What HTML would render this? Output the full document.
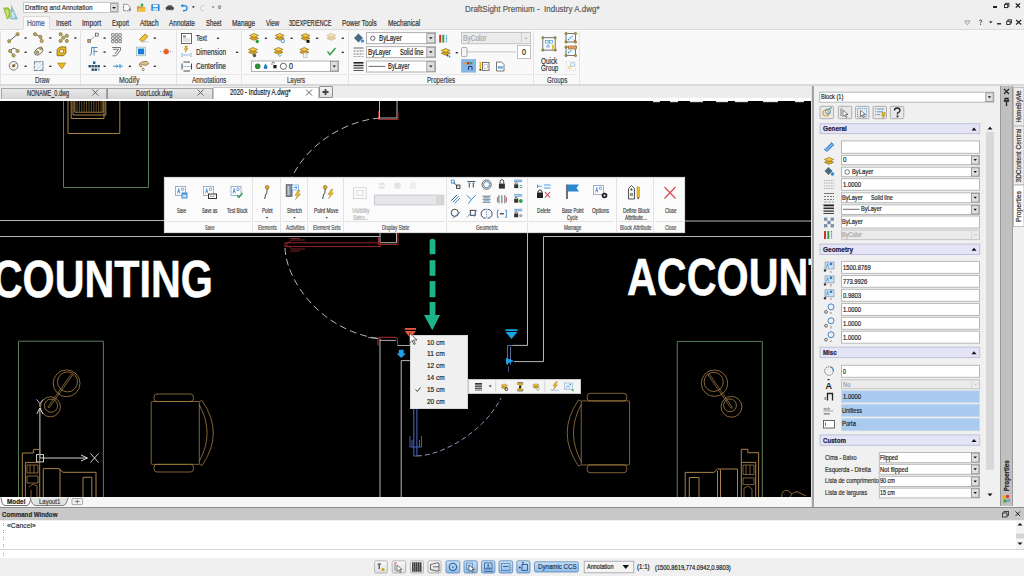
<!DOCTYPE html>
<html><head><meta charset="utf-8">
<style>
*{margin:0;padding:0;box-sizing:border-box}
html,body{width:1024px;height:576px;overflow:hidden;background:#f0f0f0;font-family:"Liberation Sans",sans-serif;color:#222;position:relative}
.a{position:absolute}
.t{position:absolute;white-space:pre;transform-origin:0 50%;-webkit-text-stroke:.2px currentColor}
svg{overflow:visible}

</style></head><body>
<div class="a" style="left:0px;top:0px;width:1024px;height:29px;background:#efefef;"></div>
<svg class="a" style="left:0px;top:0px;" width="30" height="30" viewBox="0 0 30 30"><path d="M11.2 4.3 L18 19.5 H10.3 Z" fill="#8ec0cc"/><path d="M3 7.8 L7.5 7.2 Q10.8 8.5 10.8 13 Q10.8 18.5 7 19.6 Z" fill="#94c43c"/><path d="M5.3 9.5 L7.3 9.3 Q8.8 10.5 8.8 13.2 Q8.8 16.5 7 17.3Z" fill="#c8e080"/><path d="M14 13 Q12 12.5 12 14 Q12 15 13.3 15.2 Q14.5 15.5 14.2 16.6 Q13.8 17.6 11.8 17" fill="none" stroke="#f4fbff" stroke-width="1.1"/></svg>
<div class="a" style="left:23px;top:2px;width:96px;height:11px;background:#fff;border:1px solid #c8c8c8;"></div>
<div class="a" style="left:110px;top:3px;width:8px;height:9px;background:#dcdcdc;border:1px solid #a8a8a8;"></div>
<svg class="a" style="left:111px;top:6px;" width="6" height="4" viewBox="0 0 6 4"><path d="M1 1 L5 1 L3 3 Z" fill="#222"/></svg>
<div class="t" style="left:25.00px;top:3.60px;font-size:8px;line-height:8px;color:#333;transform:scaleX(0.809);">Drafting and Annotation</div>
<svg class="a" style="left:0px;top:0px;" width="240" height="20" viewBox="0 0 240 20"><path d="M123.5 4.3 H127.5 L130 6.8 V10.8 H123.5 Z" fill="#fafafa" stroke="#666" stroke-width=".8" stroke-dasharray="2,.6"/><path d="M128.5 9.5 H131 M129.75 8.3 V10.8" stroke="#666" stroke-width=".7"/><path d="M137 6.3 H140 L141 7.3 H145.2 V11.5 H137 Z" fill="#d89a20"/><path d="M137 11.5 L138.5 8.3 H145.5 L144.5 11.5Z" fill="#f2c040"/><path d="M142 3.3 L144 5.3 H142.8 V7 H141.2 V5.3 H140Z" fill="#30a040"/><rect x="151.3" y="4.3" width="8.3" height="6.8" rx=".8" fill="#2a88d8"/><rect x="153" y="4.8" width="4.8" height="2.4" fill="#fff"/><rect x="152.8" y="8.2" width="5.2" height="2.5" fill="#d8e8f8"/><rect x="165.7" y="6.5" width="8.2" height="3.5" rx="1.5" fill="#444"/><rect x="167.5" y="5.3" width="4.6" height="2" rx=".8" fill="#555"/><circle cx="167.8" cy="9.8" r=".9" fill="#888"/><circle cx="171.8" cy="9.8" r=".9" fill="#888"/><path d="M182.2 5.8 Q186.8 5 187 8 Q187 11 183 10.8" fill="none" stroke="#2a80d8" stroke-width="1.4"/><path d="M180.3 5.8 L183.2 4 L183.2 7.6Z" fill="#2a80d8"/><path d="M191.8 6.3 H194.8 L193.3 8.2Z" fill="#333"/><path d="M204.5 5.8 Q200.5 5.3 200.5 8 Q200.5 11 204 10.8" fill="none" stroke="#d4d4d4" stroke-width="1.2"/><path d="M211.8 6.5 H214.6 L213.2 8.2Z" fill="#666"/><rect x="218" y="5.7" width="3.2" height=".8" fill="#555"/><path d="M218 7.5 H221.2 L219.6 9.2Z" fill="#555"/></svg>
<div class="t" style="left:465.00px;top:3.55px;font-size:9.5px;line-height:9.5px;color:#5a5a5a;transform:scaleX(0.841);">DraftSight Premium -  Industry A.dwg*</div>
<div class="a" style="left:993.4px;top:6px;width:3.8px;height:1.6px;background:#222;"></div>
<svg class="a" style="left:0px;top:0px;" width="1024" height="576" viewBox="0 0 1024 576"><rect x="1005.6" y="3.3" width="3.3" height="3" fill="none" stroke="#222" stroke-width=".9"/><rect x="1004.5" y="4.6" width="3.3" height="3" fill="#efefef" stroke="#222" stroke-width=".9"/><path d="M1015.8 3.3 L1020 7.6 M1020 3.3 L1015.8 7.6" stroke="#111" stroke-width="1.2"/></svg>
<svg class="a" style="left:0px;top:0px;" width="1024" height="576" viewBox="0 0 1024 576"><path d="M967.3 24.6 L965 22 Q964.5 20.6 965.8 20.5 Q966.9 20.4 967.3 21.5 Q967.7 20.4 968.8 20.5 Q970.1 20.6 969.6 22 Z" fill="none" stroke="#777" stroke-width=".7"/><path d="M979.3 21.2 Q979.5 20 980.6 20 Q981.8 20 981.8 21.2 Q981.8 22 980.6 22.6 V23.4" fill="none" stroke="#333" stroke-width=".9"/><rect x="980.2" y="24" width=".9" height=".9" fill="#333"/><path d="M989 21.3 H992.6 L990.8 23.5Z" fill="#333"/><rect x="997" y="23" width="4" height="1.5" fill="#333"/><rect x="1008" y="19.8" width="3.4" height="3.2" fill="none" stroke="#222" stroke-width=".9"/><rect x="1006.7" y="21.3" width="3.4" height="3.2" fill="#efefef" stroke="#222" stroke-width=".9"/><path d="M1016.1 20 L1021.2 24.5 M1021.2 20 L1016.1 24.5" stroke="#222" stroke-width="1.1"/></svg>
<div class="a" style="left:23px;top:16px;width:27px;height:14px;background:#f9f9f9;border:1px solid #dadada;border-bottom:none;"></div>
<div class="t" style="left:27.40px;top:19.05px;font-size:8.5px;line-height:8.5px;color:#4a5678;transform:scaleX(0.776);">Home</div>
<div class="t" style="left:55.50px;top:19.05px;font-size:8.5px;line-height:8.5px;color:#333;transform:scaleX(0.720);">Insert</div>
<div class="t" style="left:81.50px;top:19.05px;font-size:8.5px;line-height:8.5px;color:#333;transform:scaleX(0.789);">Import</div>
<div class="t" style="left:111.80px;top:19.05px;font-size:8.5px;line-height:8.5px;color:#333;transform:scaleX(0.692);">Export</div>
<div class="t" style="left:139.50px;top:19.05px;font-size:8.5px;line-height:8.5px;color:#333;transform:scaleX(0.768);">Attach</div>
<div class="t" style="left:169.40px;top:19.05px;font-size:8.5px;line-height:8.5px;color:#333;transform:scaleX(0.758);">Annotate</div>
<div class="t" style="left:205.50px;top:19.05px;font-size:8.5px;line-height:8.5px;color:#333;transform:scaleX(0.698);">Sheet</div>
<div class="t" style="left:231.80px;top:19.05px;font-size:8.5px;line-height:8.5px;color:#333;transform:scaleX(0.755);">Manage</div>
<div class="t" style="left:265.80px;top:19.05px;font-size:8.5px;line-height:8.5px;color:#333;transform:scaleX(0.722);">View</div>
<div class="t" style="left:289.40px;top:19.05px;font-size:8.5px;line-height:8.5px;color:#333;transform:scaleX(0.644);">3DEXPERIENCE</div>
<div class="t" style="left:342.40px;top:19.05px;font-size:8.5px;line-height:8.5px;color:#333;transform:scaleX(0.752);">Power Tools</div>
<div class="t" style="left:388.00px;top:19.05px;font-size:8.5px;line-height:8.5px;color:#333;transform:scaleX(0.749);">Mechanical</div>
<div class="a" style="left:0px;top:29px;width:1024px;height:57px;background:#f9f9f9;"></div>
<div class="a" style="left:0px;top:29px;width:23px;height:1px;background:#dadada;"></div>
<div class="a" style="left:50px;top:29px;width:974px;height:1px;background:#dadada;"></div>
<div class="a" style="left:0px;top:84px;width:1024px;height:2px;background:#d9d9d9;"></div>
<div class="a" style="left:2px;top:74px;width:77px;height:1px;background:#e6e6e6;"></div>
<div class="a" style="left:82px;top:74px;width:93px;height:1px;background:#e6e6e6;"></div>
<div class="a" style="left:177px;top:74px;width:63px;height:1px;background:#e6e6e6;"></div>
<div class="a" style="left:243px;top:74px;width:104px;height:1px;background:#e6e6e6;"></div>
<div class="a" style="left:350px;top:74px;width:182px;height:1px;background:#e6e6e6;"></div>
<div class="a" style="left:535px;top:74px;width:42px;height:1px;background:#e6e6e6;"></div>
<div class="a" style="left:80px;top:31px;width:1px;height:53px;background:#e3e3e3;"></div>
<div class="a" style="left:176px;top:31px;width:1px;height:53px;background:#e3e3e3;"></div>
<div class="a" style="left:241px;top:31px;width:1px;height:53px;background:#e3e3e3;"></div>
<div class="a" style="left:348px;top:31px;width:1px;height:53px;background:#e3e3e3;"></div>
<div class="a" style="left:533px;top:31px;width:1px;height:53px;background:#e3e3e3;"></div>
<div class="a" style="left:579px;top:31px;width:1px;height:53px;background:#e3e3e3;"></div>
<div class="a" style="left:0px;top:31px;width:1px;height:53px;background:#e3e3e3;"></div>
<div class="t" style="left:34.60px;top:75.55px;font-size:8.5px;line-height:8.5px;color:#444;transform:scaleX(0.736);">Draw</div>
<div class="t" style="left:119.00px;top:75.55px;font-size:8.5px;line-height:8.5px;color:#444;transform:scaleX(0.815);">Modify</div>
<div class="t" style="left:192.30px;top:75.55px;font-size:8.5px;line-height:8.5px;color:#444;transform:scaleX(0.764);">Annotations</div>
<div class="t" style="left:286.50px;top:75.55px;font-size:8.5px;line-height:8.5px;color:#444;transform:scaleX(0.706);">Layers</div>
<div class="t" style="left:427.00px;top:75.55px;font-size:8.5px;line-height:8.5px;color:#444;transform:scaleX(0.723);">Properties</div>
<div class="t" style="left:546.70px;top:75.55px;font-size:8.5px;line-height:8.5px;color:#444;transform:scaleX(0.728);">Groups</div>
<svg class="a" style="left:0px;top:0px;" width="1024" height="576" viewBox="0 0 1024 576"><line x1="9.2" y1="41.2" x2="17.6" y2="34.2" stroke="#555" stroke-width=".9"/><circle cx="9.2" cy="41.2" r="1.6" fill="#b8a860" stroke="#8a7a40" stroke-width=".8"/><circle cx="17.6" cy="34.2" r="1.6" fill="#b8a860" stroke="#8a7a40" stroke-width=".8"/><polyline points="35.1,34.2 40.4,36.8 41.7,41" fill="none" stroke="#555" stroke-width=".9"/><circle cx="35.1" cy="34.2" r="1.6" fill="#b8a860" stroke="#8a7a40" stroke-width=".8"/><circle cx="40.4" cy="36.8" r="1.6" fill="#b8a860" stroke="#8a7a40" stroke-width=".8"/><circle cx="41.7" cy="41" r="1.6" fill="#d8b060" stroke="#8a7a40" stroke-width=".8"/><circle cx="60.6" cy="34.2" r="1.6" fill="#b8a860" stroke="#8a7a40" stroke-width=".8"/><circle cx="66.8" cy="35.8" r="1.6" fill="#b8a860" stroke="#8a7a40" stroke-width=".8"/><circle cx="63.3" cy="37.7" r="1.6" fill="#b8a860" stroke="#8a7a40" stroke-width=".8"/><circle cx="60.6" cy="40.9" r="1.6" fill="#b8a860" stroke="#8a7a40" stroke-width=".8"/><circle cx="66.8" cy="40.9" r="1.6" fill="#b8a860" stroke="#8a7a40" stroke-width=".8"/><rect x="24.5" y="37.3" width="2.2" height="1.4" fill="#333"/><rect x="49.2" y="37.3" width="2.2" height="1.4" fill="#333"/><rect x="74.3" y="37.3" width="2.2" height="1.4" fill="#333"/><path d="M10.1 51 Q13.8 45.5 17.6 51" fill="none" stroke="#555" stroke-width=".9"/><path d="M10.1 51 L13.6 55.5" stroke="#555" stroke-width=".9"/><circle cx="10.1" cy="51" r="1.6" fill="#b8a860" stroke="#8a7a40" stroke-width=".8"/><circle cx="17.6" cy="51" r="1.6" fill="#b8a860" stroke="#8a7a40" stroke-width=".8"/><circle cx="13.6" cy="55.5" r="1.6" fill="#b8a860" stroke="#8a7a40" stroke-width=".8"/><ellipse cx="38.7" cy="51.3" rx="4.8" ry="3" transform="rotate(-40 38.7 51.3)" fill="none" stroke="#666" stroke-width=".9"/><circle cx="37.3" cy="52.3" r="1.5" fill="#b8a860" stroke="#8a7a40" stroke-width=".8"/><circle cx="40.8" cy="48.3" r="1.4" fill="#b8a860" stroke="#8a7a40" stroke-width=".8"/><path d="M58 48.5 L60.5 46.9 H65.9 V53 L63.5 55.7 H57.1 V50 Z" fill="#e8b820" stroke="#8a6a10" stroke-width=".9"/><circle cx="61.6" cy="51.3" r="2" fill="#fff8e0" stroke="#8a6a10" stroke-width=".8"/><rect x="24.5" y="51.6" width="2.2" height="1.4" fill="#333"/><rect x="49.2" y="51.6" width="2.2" height="1.4" fill="#333"/><circle cx="13.6" cy="65.8" r="4.3" fill="none" stroke="#666" stroke-width=".9"/><circle cx="13.6" cy="65.8" r="1.3" fill="#6a6030" stroke="#8a7a40" stroke-width=".8"/><line x1="13.6" y1="65.8" x2="17" y2="62.5" stroke="#8a7a40" stroke-width=".8"/><rect x="34.3" y="61.8" width="8.7" height="8.8" fill="#cfe4ea" stroke="#607880" stroke-width=".8"/><path d="M34.5 66 L38.5 62 M34.5 69.5 L42 62 M38 70.4 L42.8 65.6" stroke="#fff" stroke-width="1.1"/><path d="M57.6 63.1 H65.9 L61.8 68.9 Z" fill="#f0b818" stroke="#9a7010" stroke-width=".6"/><rect x="24.5" y="65.60000000000001" width="2.2" height="1.4" fill="#333"/><rect x="49.2" y="65.60000000000001" width="2.2" height="1.4" fill="#333"/><line x1="89.5" y1="41" x2="96.5" y2="34.8" stroke="#4a90c8" stroke-width="1" stroke-dasharray="1.5,1"/><rect x="87.8" y="39.6" width="2.8" height="2.8" fill="#c8a850" stroke="#555" stroke-width=".6"/><rect x="95.4" y="33.2" width="2.8" height="2.8" fill="#fff" stroke="#444" stroke-width=".7"/><rect x="111.6" y="33.6" width="2.6" height="2.5" rx=".6" fill="#fff" stroke="#555" stroke-width=".8"/><rect x="111.6" y="36.9" width="2.6" height="2.5" rx=".6" fill="#fff" stroke="#555" stroke-width=".8"/><rect x="111.6" y="40.2" width="2.6" height="2.5" rx=".6" fill="#fff" stroke="#555" stroke-width=".8"/><rect x="115.19999999999999" y="33.6" width="2.6" height="2.5" rx=".6" fill="#fff" stroke="#555" stroke-width=".8"/><rect x="115.19999999999999" y="36.9" width="2.6" height="2.5" rx=".6" fill="#fff" stroke="#555" stroke-width=".8"/><rect x="115.19999999999999" y="40.2" width="2.6" height="2.5" rx=".6" fill="#fff" stroke="#555" stroke-width=".8"/><rect x="118.8" y="33.6" width="2.6" height="2.5" rx=".6" fill="#fff" stroke="#555" stroke-width=".8"/><rect x="118.8" y="36.9" width="2.6" height="2.5" rx=".6" fill="#fff" stroke="#555" stroke-width=".8"/><rect x="118.8" y="40.2" width="2.6" height="2.5" rx=".6" fill="#fff" stroke="#555" stroke-width=".8"/><path d="M139.5 39.5 L145 34 L148 36.5 L142.5 42 Z" fill="#f2c230" stroke="#8a6a10" stroke-width=".7"/><line x1="142" y1="41.8" x2="148" y2="41.8" stroke="#bbb" stroke-width=".8"/><rect x="103.5" y="37.4" width="2.2" height="1.4" fill="#333"/><rect x="153.7" y="37.4" width="2.2" height="1.4" fill="#333"/><path d="M89.5 55.5 Q91.5 55.5 91.5 52 V47.5 H97.5 M94 47.5 V55.5 M94 51.5 H97.5" fill="none" stroke="#4a90c8" stroke-width="1"/><path d="M112.1 47.5 H120.5 V50 L116 55.8 H112.5 M113 49.3 H118.5 L115 54" fill="none" stroke="#666" stroke-width=".9"/><rect x="136.5" y="47.1" width="9.1" height="8.7" fill="#e8f0f8" stroke="#8aa" stroke-width=".6"/><rect x="138" y="48.6" width="6.1" height="5.7" fill="#1a7ad8"/><circle cx="166.2" cy="51.5" r="2.6" fill="#e85a20" stroke="#f08040" stroke-width="1.2" stroke-dasharray="1,.8"/><line x1="160" y1="51.5" x2="162.3" y2="51.5" stroke="#4a90c8" stroke-width=".8" stroke-dasharray="1,1"/><line x1="170" y1="51.5" x2="172.5" y2="51.5" stroke="#4a90c8" stroke-width=".8" stroke-dasharray="1,1"/><rect x="103.5" y="51.4" width="2.2" height="1.4" fill="#333"/><rect x="93" y="61.5" width="2.4" height="2.4" fill="#1f4e70"/><rect x="88.5" y="65" width="2.4" height="2.4" fill="#1f4e70"/><rect x="91.5" y="65" width="2.4" height="2.4" fill="#1f4e70"/><rect x="94.5" y="65" width="2.4" height="2.4" fill="#1f4e70"/><rect x="97.5" y="65" width="2.4" height="2.4" fill="#1f4e70"/><rect x="91.5" y="68.5" width="2.4" height="2.4" fill="#1f4e70"/><rect x="94.5" y="68.5" width="2.4" height="2.4" fill="#1f4e70"/><circle cx="98.5" cy="69.5" r="1.3" fill="#aaa"/><path d="M113 66.2 H118 M116.3 64.8 L118 66.2 L116.3 67.6 M120 64 V68.4 M118.4 66.2 H123" fill="none" stroke="#2a88c8" stroke-width=".9"/><path d="M139 64 Q142 60.5 147 61.5 L149 63.5 L146 65.5 L141.5 64.5 L140.5 67 Z" fill="#d8c090" stroke="#8a6a30" stroke-width=".7"/><circle cx="143.2" cy="69.5" r="1.1" fill="#fff" stroke="#6a6030" stroke-width=".7"/><line x1="141" y1="66" x2="143" y2="68.5" stroke="#8a6a30" stroke-width=".6"/><rect x="103.5" y="65.60000000000001" width="2.2" height="1.4" fill="#333"/><rect x="128.8" y="65.60000000000001" width="2.2" height="1.4" fill="#333"/><rect x="153.7" y="65.60000000000001" width="2.2" height="1.4" fill="#333"/><rect x="181.5" y="33.5" width="10" height="10" fill="#fff" stroke="#555" stroke-width=".9"/><rect x="183" y="35.5" width="3" height="2" fill="#888"/><line x1="183" y1="39" x2="190" y2="39" stroke="#aaa" stroke-width=".7"/><line x1="183" y1="41" x2="190" y2="41" stroke="#aaa" stroke-width=".7"/><path d="M185.5 46 L187.5 46 L186.5 48.5 L188 48.5 L185.2 52.3 L185.8 49.6 L184.5 49.6Z" fill="#f0b818" stroke="#9a7010" stroke-width=".4"/><path d="M182 53 V57 M191 53 V57 M182.5 55 H190.5" stroke="#3a80c0" stroke-width=".8" stroke-dasharray="1,.6"/><path d="M183.5 62 H190 M183.5 71 H190 M182 63.5 V69.5 M191.5 63.5 V69.5" stroke="#333" stroke-width=".9"/><path d="M182 66.5 H191.5" stroke="#4a90c8" stroke-width=".8" stroke-dasharray="1.5,1"/><rect x="216.9" y="37.6" width="2.2" height="1.4" fill="#333"/><rect x="236" y="51.6" width="2.2" height="1.4" fill="#333"/></svg>
<div class="t" style="left:196.00px;top:33.70px;font-size:9px;line-height:9px;color:#333;transform:scaleX(0.666);">Text</div>
<div class="t" style="left:196.00px;top:47.60px;font-size:9px;line-height:9px;color:#333;transform:scaleX(0.706);">Dimension</div>
<div class="t" style="left:196.00px;top:62.10px;font-size:9px;line-height:9px;color:#333;transform:scaleX(0.731);">Centerline</div>
<svg class="a" style="left:0px;top:0px;" width="1024" height="576" viewBox="0 0 1024 576"><path d="M249.5 38.3 L254 36.3 L258.5 38.3 L254 40.3Z" fill="#e0a818" stroke="#7a5a10" stroke-width=".6"/><path d="M249.5 35.5 L254 33.5 L258.5 35.5 L254 37.5Z" fill="#f6cc40" stroke="#7a5a10" stroke-width=".6"/><circle cx="257.3" cy="41.5" r="1.7" fill="#2a9a3a"/><path d="M275.2 38.3 L279.7 36.3 L284.2 38.3 L279.7 40.3Z" fill="#e0a818" stroke="#7a5a10" stroke-width=".6"/><path d="M275.2 35.5 L279.7 33.5 L284.2 35.5 L279.7 37.5Z" fill="#f6cc40" stroke="#7a5a10" stroke-width=".6"/><circle cx="282.8" cy="41" r="1.7" fill="#fff" stroke="#3a9ae0" stroke-width="1"/><path d="M301.0 38.3 L305.5 36.3 L310.0 38.3 L305.5 40.3Z" fill="#e0a818" stroke="#7a5a10" stroke-width=".6"/><path d="M301.0 35.5 L305.5 33.5 L310.0 35.5 L305.5 37.5Z" fill="#f6cc40" stroke="#7a5a10" stroke-width=".6"/><rect x="306.5" y="40" width="3" height="2.8" fill="#111"/><g opacity=".45"><path d="M326.8 38.3 L331.3 36.3 L335.8 38.3 L331.3 40.3Z" fill="#e0a818" stroke="#7a5a10" stroke-width=".6"/><path d="M326.8 35.5 L331.3 33.5 L335.8 35.5 L331.3 37.5Z" fill="#f6cc40" stroke="#7a5a10" stroke-width=".6"/></g><path d="M248.5 52.3 L253 50.3 L257.5 52.3 L253 54.3Z" fill="#e0a818" stroke="#7a5a10" stroke-width=".6"/><path d="M248.5 49.5 L253 47.5 L257.5 49.5 L253 51.5Z" fill="#f6cc40" stroke="#7a5a10" stroke-width=".6"/><circle cx="254.5" cy="55.5" r="1.7" fill="#555"/><path d="M274.0 52.3 L278.5 50.3 L283.0 52.3 L278.5 54.3Z" fill="#e0a818" stroke="#7a5a10" stroke-width=".6"/><path d="M274.0 49.5 L278.5 47.5 L283.0 49.5 L278.5 51.5Z" fill="#f6cc40" stroke="#7a5a10" stroke-width=".6"/><path d="M278 55 l2 1.5 l1.5 -2" stroke="#5a9ac8" stroke-width=".8" fill="none"/><path d="M299.8 52.3 L304.3 50.3 L308.8 52.3 L304.3 54.3Z" fill="#e0a818" stroke="#7a5a10" stroke-width=".6"/><path d="M299.8 49.5 L304.3 47.5 L308.8 49.5 L304.3 51.5Z" fill="#f6cc40" stroke="#7a5a10" stroke-width=".6"/><rect x="303.5" y="53" width="3.5" height="4.5" fill="#f4f4f4" stroke="#aaa" stroke-width=".6"/><path d="M327.5 51.5 L330 54.5 L335.5 48" fill="none" stroke="#3aa050" stroke-width="1.5"/><rect x="264.8" y="37.6" width="2.2" height="1.4" fill="#333"/><rect x="290.5" y="37.6" width="2.2" height="1.4" fill="#333"/><rect x="316" y="37.6" width="2.2" height="1.4" fill="#333"/><rect x="341.7" y="37.6" width="2.2" height="1.4" fill="#333"/><rect x="341.7" y="51.699999999999996" width="2.2" height="1.4" fill="#333"/><rect x="251.5" y="61" width="87" height="10.5" fill="#fff" stroke="#b0b0b0" stroke-width="1"/><rect x="330.5" y="61.5" width="7.5" height="9.5" fill="#e0e0e0" stroke="#909090" stroke-width=".8"/><path d="M332.5 65.5 H336 L334.25 67.5Z" fill="#222"/><circle cx="257.7" cy="66.3" r="2.8" fill="#2e8b3e"/><path d="M265.6 63.5 Q267.6 66.5 267.5 67.2 A1.9 1.9 0 1 1 263.7 67.2 Q263.6 66.5 265.6 63.5Z" fill="#2a78d0"/><path d="M272 65 V63.5 Q272 62 273.3 62 Q274.5 62 274.5 63.5" fill="none" stroke="#444" stroke-width=".7"/><rect x="273.3" y="65" width="3.3" height="3.3" fill="#222"/><circle cx="283.4" cy="66.3" r="3.1" fill="#fff" stroke="#444" stroke-width=".8"/></svg>
<div class="t" style="left:288.50px;top:62.00px;font-size:9px;line-height:9px;color:#222;transform:scaleX(0.799);">0</div>
<svg class="a" style="left:0px;top:0px;" width="1024" height="576" viewBox="0 0 1024 576"><path d="M354 38 L358.5 33.5 L363 38 L358.5 42.5Z" fill="#4a6a80"/><circle cx="362.5" cy="41" r="1.6" fill="#2a8ad8"/><path d="M353.5 48 H363.5" stroke="#444" stroke-width=".8"/><path d="M353.5 51 H363.5 M353.5 54 H363.5" stroke="#555" stroke-width=".8" stroke-dasharray="2,1"/><path d="M353.5 56.5 H363.5" stroke="#777" stroke-width=".6" stroke-dasharray="3,1"/><rect x="353.5" y="62" width="10" height="1.6" fill="#222"/><rect x="353.5" y="64.8" width="10" height="1.4" fill="#333"/><rect x="353.5" y="67.5" width="10" height="1.1" fill="#333"/><rect x="353.5" y="70" width="10" height=".9" fill="#444"/><rect x="366.5" y="32.6" width="69" height="11" fill="#fff" stroke="#b0b0b0" stroke-width="1"/><rect x="426.8" y="33.300000000000004" width="8" height="9.6" fill="#e0e0e0" stroke="#909090" stroke-width=".8"/><path d="M429 37.2 H432.6 L430.8 39.2Z" fill="#222"/><rect x="366.5" y="46.6" width="69" height="11" fill="#fff" stroke="#b0b0b0" stroke-width="1"/><rect x="426.8" y="47.300000000000004" width="8" height="9.6" fill="#e0e0e0" stroke="#909090" stroke-width=".8"/><path d="M429 51.2 H432.6 L430.8 53.2Z" fill="#222"/><rect x="366.5" y="61" width="69" height="11" fill="#fff" stroke="#b0b0b0" stroke-width="1"/><rect x="426.8" y="61.7" width="8" height="9.6" fill="#e0e0e0" stroke="#909090" stroke-width=".8"/><path d="M429 65.6 H432.6 L430.8 67.6Z" fill="#222"/><circle cx="372.8" cy="38.2" r="2.2" fill="none" stroke="#444" stroke-width=".8"/><path d="M368.5 66.4 H385.5" stroke="#444" stroke-width=".8"/><rect x="439.2" y="34.8" width="2" height="7.8" fill="#d03030"/><rect x="442.3" y="34.8" width="2" height="7.8" fill="#30a040"/><path d="M446.5 34.8 V42.6" stroke="#3090d0" stroke-width="1.2" stroke-dasharray="1,.6"/><path d="M441.2 53.3 L445.7 51.3 L450.2 53.3 L445.7 55.3Z" fill="#e0a818" stroke="#7a5a10" stroke-width=".6"/><path d="M441.2 50.5 L445.7 48.5 L450.2 50.5 L445.7 52.5Z" fill="#f6cc40" stroke="#7a5a10" stroke-width=".6"/><circle cx="447.5" cy="55.5" r=".9" fill="#444"/><circle cx="449.5" cy="56.5" r=".9" fill="#3a80c0"/><rect x="455.7" y="52" width="2.2" height="1.4" fill="#333"/><rect x="461.5" y="32.5" width="69" height="11.2" fill="#ebebeb" stroke="#c4c4c4" stroke-width="1"/><line x1="521.5" y1="33" x2="521.5" y2="43.5" stroke="#d0d0d0"/><path d="M524.5 37.8 H527.5 L526 39.5Z" fill="#aaa"/><rect x="464" y="51" width="52" height="1.6" fill="#d8d8d8"/><rect x="461.5" y="47.5" width="5.5" height="9.2" rx="1" fill="#f4f4f4" stroke="#999" stroke-width=".8"/><rect x="517.5" y="45.5" width="13" height="13" fill="#fff" stroke="#c0c0c0" stroke-width="1"/><rect x="461.1" y="59.1" width="14.9" height="13.5" fill="#86b6e6"/><rect x="464" y="62" width="2.4" height="2.4" fill="#e0a040"/><rect x="467" y="62" width="2.4" height="2.4" fill="#c03030"/><rect x="470" y="62" width="2.4" height="2.4" fill="#40a050"/><path d="M468.5 70 V66.5 H472 V70" fill="none" stroke="#1a3a6a" stroke-width="1"/><rect x="479.5" y="62" width="1.8" height="7.5" fill="#e8b820"/><rect x="479.5" y="69.2" width="1.8" height="1.4" fill="#222"/><rect x="482.5" y="62.5" width="6.5" height="8" fill="#fff" stroke="#555" stroke-width=".8"/><rect x="484" y="64.5" width="3.5" height="4" fill="none" stroke="#999" stroke-width=".5"/><path d="M496.5 62 H501.5 L504 64.5 V71 H496.5Z" fill="#fff" stroke="#555" stroke-width=".8"/><rect x="497.8" y="66" width="5" height="2.8" fill="#7ab0e0"/><rect x="542.8" y="37.7" width="12.400000000000091" height="12.399999999999999" fill="#f4f8fc" stroke="#555" stroke-width=".8"/><circle cx="542.8" cy="37.7" r="1.2" fill="#b0a050" stroke="#6a5a20" stroke-width=".5"/><circle cx="555.2" cy="37.7" r="1.2" fill="#b0a050" stroke="#6a5a20" stroke-width=".5"/><circle cx="542.8" cy="50.1" r="1.2" fill="#b0a050" stroke="#6a5a20" stroke-width=".5"/><circle cx="555.2" cy="50.1" r="1.2" fill="#b0a050" stroke="#6a5a20" stroke-width=".5"/><rect x="545.5" y="40.5" width="3" height="2.5" fill="none" stroke="#3a90c8" stroke-width=".6"/><rect x="549.5" y="40.5" width="3" height="2.5" fill="none" stroke="#3a90c8" stroke-width=".6"/><path d="M546.5 47 L548 44.3 L549.5 47Z" fill="none" stroke="#3a90c8" stroke-width=".6"/><path d="M552 45 L554.5 44 L553 47 L555 46.5 L552 50Z" fill="#e8b820"/><rect x="566" y="33.5" width="9.5" height="8.5" fill="#f4f8fc" stroke="#555" stroke-width=".8"/><circle cx="566" cy="33.5" r="1.2" fill="#b0a050" stroke="#6a5a20" stroke-width=".5"/><circle cx="575.5" cy="33.5" r="1.2" fill="#b0a050" stroke="#6a5a20" stroke-width=".5"/><circle cx="566" cy="42" r="1.2" fill="#b0a050" stroke="#6a5a20" stroke-width=".5"/><circle cx="575.5" cy="42" r="1.2" fill="#b0a050" stroke="#6a5a20" stroke-width=".5"/><path d="M568 40 L573 35.5" stroke="#3a90c8" stroke-width="1.2" stroke-dasharray="1.5,.8"/><path d="M573.5 39.5 L575.5 41.5 M575.5 39.5 L573.5 41.5" stroke="#d05050" stroke-width=".7"/><rect x="566" y="47" width="9.5" height="8.5" fill="#f4f8fc" stroke="#555" stroke-width=".8"/><circle cx="566" cy="47" r="1.2" fill="#b0a050" stroke="#6a5a20" stroke-width=".5"/><circle cx="575.5" cy="47" r="1.2" fill="#b0a050" stroke="#6a5a20" stroke-width=".5"/><circle cx="566" cy="55.5" r="1.2" fill="#b0a050" stroke="#6a5a20" stroke-width=".5"/><circle cx="575.5" cy="55.5" r="1.2" fill="#b0a050" stroke="#6a5a20" stroke-width=".5"/><rect x="568.5" y="46" width="8" height="3" fill="#e0a060" stroke="#8a5a20" stroke-width=".5"/><path d="M568 53 L572 50" stroke="#3a90c8" stroke-width="1.2" stroke-dasharray="1.5,.8"/><g opacity=".55"><rect x="566" y="61.5" width="9.5" height="9" fill="none" stroke="#aaa" stroke-width=".6" stroke-dasharray="1,1"/><circle cx="569.5" cy="67.5" r="2" fill="#e8d060"/><circle cx="572.5" cy="64.5" r="2" fill="none" stroke="#3a90c8" stroke-width=".9"/></g></svg>
<div class="t" style="left:378.50px;top:33.80px;font-size:9px;line-height:9px;color:#222;transform:scaleX(0.688);">ByLayer</div>
<div class="t" style="left:367.70px;top:47.70px;font-size:9px;line-height:9px;color:#222;transform:scaleX(0.691);">ByLayer</div>
<div class="t" style="left:400.00px;top:47.70px;font-size:9px;line-height:9px;color:#222;transform:scaleX(0.643);">Solid line</div>
<div class="t" style="left:387.60px;top:62.00px;font-size:9px;line-height:9px;color:#222;transform:scaleX(0.648);">ByLayer</div>
<div class="t" style="left:462.70px;top:33.80px;font-size:9px;line-height:9px;color:#a8a8a8;transform:scaleX(0.731);">ByColor</div>
<div class="t" style="left:521.50px;top:47.50px;font-size:9px;line-height:9px;color:#222;transform:scaleX(0.799);">0</div>
<div class="t" style="left:541.00px;top:56.50px;font-size:9px;line-height:9px;color:#333;transform:scaleX(0.709);">Quick</div>
<div class="t" style="left:540.50px;top:64.10px;font-size:9px;line-height:9px;color:#333;transform:scaleX(0.692);">Group</div>
<div class="a" style="left:0px;top:86px;width:811px;height:15px;background:#ededed;"></div>
<div class="a" style="left:0px;top:98px;width:811px;height:3px;background:#fdfdfd;"></div>
<div class="a" style="left:1px;top:87.5px;width:105.5px;height:11px;background:linear-gradient(#e8e8e8,#d6d6d6);border:1px solid #a8a8a8;border-bottom:none;"></div>
<div class="a" style="left:106.5px;top:87.5px;width:106px;height:11px;background:linear-gradient(#e8e8e8,#d6d6d6);border:1px solid #a8a8a8;border-bottom:none;border-left:1px solid #909090;"></div>
<div class="a" style="left:212.5px;top:87px;width:106px;height:11.5px;background:#ffffff;border:1px solid #c8c8c8;border-bottom:none;"></div>
<div class="a" style="left:319.3px;top:86.2px;width:13.5px;height:12px;background:linear-gradient(#f4f4f4,#dcdcdc);border:1px solid #909090;border-radius:1px;"></div>
<div class="t" style="left:26.50px;top:88.55px;font-size:8.5px;line-height:8.5px;color:#333;transform:scaleX(0.649);">NONAME_0.dwg</div>
<div class="t" style="left:135.50px;top:88.55px;font-size:8.5px;line-height:8.5px;color:#333;transform:scaleX(0.672);">DoorLock.dwg</div>
<div class="t" style="left:230.00px;top:88.25px;font-size:8.5px;line-height:8.5px;color:#222;transform:scaleX(0.709);">2020 - Industry A.dwg*</div>
<svg class="a" style="left:0px;top:0px;" width="1024" height="576" viewBox="0 0 1024 576"><path d="M92.3 89.5 L98.3 95.5 M98.3 89.5 L92.3 95.5" stroke="#555" stroke-width=".9"/><path d="M197.5 89.5 L203.5 95.5 M203.5 89.5 L197.5 95.5" stroke="#555" stroke-width=".9"/><path d="M306 89.5 L312 95.5 M312 89.5 L306 95.5" stroke="#555" stroke-width=".9"/><path d="M322.5 92 H328.5 M325.5 89 V95" stroke="#444" stroke-width="1.8"/></svg>
<div class="a" style="left:0px;top:101px;width:811px;height:396px;background:#000;"></div>
<svg class="a" style="left:0px;top:0px;" width="1024" height="576" viewBox="0 0 1024 576"><defs><clipPath id="dc"><rect x="0" y="101" width="811" height="396"/></clipPath></defs><g clip-path="url(#dc)"><polyline points="63.5,100 63.5,187.5 148.5,187.5 148.5,100" fill="none" stroke="#5a7c5a" stroke-width="1"/><polyline points="68,100 68,133.5 119.8,133.5 119.8,100" fill="none" stroke="#a88248" stroke-width="1"/><polyline points="71.2,100 71.2,118.5 104,118.5 104,100" fill="none" stroke="#a88248" stroke-width="1"/><polyline points="73,100 73,115 105.8,115 105.8,100" fill="none" stroke="#a88248" stroke-width="1"/><polyline points="74.8,100 74.8,112.2 103,112.2 103,100" fill="none" stroke="#a88248" stroke-width="1"/><line x1="77.00" y1="101" x2="77.00" y2="111.5" stroke="#a88248" stroke-width=".6"/><line x1="79.40" y1="101" x2="79.40" y2="111.5" stroke="#a88248" stroke-width=".6"/><line x1="81.80" y1="101" x2="81.80" y2="111.5" stroke="#a88248" stroke-width=".6"/><line x1="84.20" y1="101" x2="84.20" y2="111.5" stroke="#a88248" stroke-width=".6"/><line x1="86.60" y1="101" x2="86.60" y2="111.5" stroke="#a88248" stroke-width=".6"/><line x1="89.00" y1="101" x2="89.00" y2="111.5" stroke="#a88248" stroke-width=".6"/><line x1="91.40" y1="101" x2="91.40" y2="111.5" stroke="#a88248" stroke-width=".6"/><line x1="93.80" y1="101" x2="93.80" y2="111.5" stroke="#a88248" stroke-width=".6"/><line x1="96.20" y1="101" x2="96.20" y2="111.5" stroke="#a88248" stroke-width=".6"/><line x1="98.60" y1="101" x2="98.60" y2="111.5" stroke="#a88248" stroke-width=".6"/><line x1="101.00" y1="101" x2="101.00" y2="111.5" stroke="#a88248" stroke-width=".6"/><rect x="653" y="101" width="7" height="1.2" fill="#e0e0e0"/><rect x="670" y="101" width="8" height="1.2" fill="#e0e0e0"/><rect x="690" y="101" width="13" height="1.2" fill="#e0e0e0"/><rect x="716" y="101" width="12" height="1.2" fill="#e0e0e0"/><rect x="735" y="101" width="13" height="1.2" fill="#e0e0e0"/><rect x="763" y="101" width="15" height="1.2" fill="#e0e0e0"/><rect x="795" y="101" width="9" height="1.2" fill="#e0e0e0"/><polyline points="0,220.5 165,220.5" fill="none" stroke="#b8b8b8" stroke-width="1"/><polyline points="685,221 811,221" fill="none" stroke="#b8b8b8" stroke-width="1"/><polyline points="0,236.5 380,236.5" fill="none" stroke="#b8b8b8" stroke-width="1"/><polyline points="543.5,361.6 543.5,236.5 811,236.5" fill="none" stroke="#b8b8b8" stroke-width="1"/><polyline points="527.5,232 527.5,345.4 512,345.4" fill="none" stroke="#b8b8b8" stroke-width="1"/><polyline points="543.5,361.6 514,361.6" fill="none" stroke="#b8b8b8" stroke-width="1"/><rect x="379.5" y="100" width="17.5" height="18" fill="none" stroke="#b8b8b8" stroke-width="1"/><polyline points="378.5,111 378.5,119.5 398,119.5 398,111" fill="none" stroke="#a02a2a" stroke-width="1"/><path d="M380 118 C350 120, 310 140, 292 177 C285 190, 283 215, 284 232" fill="none" stroke="#d4d4d4" stroke-width=".85" stroke-dasharray="7,4"/><polyline points="380,232 380,242.7 396.5,242.7 396.5,232" fill="none" stroke="#b8b8b8" stroke-width="1"/><polyline points="378.5,237.5 378.5,244.5 398,244.5 398,232" fill="none" stroke="#a02a2a" stroke-width="1"/><rect x="285" y="242.8" width="95.19999999999999" height="3.799999999999983" fill="none" stroke="#a02a2a" stroke-width="0.9"/><path d="M305 240 H292 L286 244.5 L292 249 H305 M300 238.5 H290 M300 251 H290" fill="none" stroke="#a02a2a" stroke-width=".8"/><path d="M285 248 C286 280, 320 330, 378 338.5" fill="none" stroke="#d4d4d4" stroke-width=".85" stroke-dasharray="7,4"/><polyline points="380,338.5 380,497" fill="none" stroke="#b8b8b8" stroke-width="1"/><polyline points="401.2,497 401.2,360.6 410,360.6" fill="none" stroke="#b8b8b8" stroke-width="1"/><path d="M378 345.5 V339.5 Q378 337.3 380.5 337.3 H395 Q397.5 337.3 397.5 339.5 V345.5" fill="none" stroke="#b03030" stroke-width="1"/><polyline points="380,340.4 396,340.4" fill="none" stroke="#d8d8d8" stroke-width="0.8"/><polyline points="397.5,345.5 410,345.5" fill="none" stroke="#b8b8b8" stroke-width="0.9"/><polyline points="368,337.5 378,338.5" fill="none" stroke="#b8b8b8" stroke-width="0.8"/><polyline points="410,340 410,345 413.8,345 413.8,456 416.9,456 416.9,345" fill="none" stroke="#4a6ac8" stroke-width="1"/><path d="M410 436 V447 H421.5 V436 M412 440 V447 M419.5 440 V447" fill="none" stroke="#4a6ac8" stroke-width=".9"/><path d="M417 456 C445 455, 485 430, 501 398" fill="none" stroke="#9aa8d0" stroke-width=".9" stroke-dasharray="5,3"/><path d="M507.5 365 V345.5 H514 M510.5 365 V347" fill="none" stroke="#7088c8" stroke-width=".8"/><polyline points="508.5,366 508.5,372" fill="none" stroke="#5a6a90" stroke-width="0.8"/><path d="M506 357.8 L514 361 L506 364.2Z" fill="#1ea0e8"/><rect x="404.8" y="328" width="11.2" height="1.8" fill="#e05a40"/><path d="M404.8 331 H416 L410.4 338.5Z" fill="#e05a40"/><path d="M505.5 329.3 H517.5 V331 H505.5Z M505.5 332 H517.5 L511.5 339Z" fill="#1ea0e8"/><path d="M398.8 349.7 H403.7 V353.5 H406 L401.25 358 L396.5 353.5 H398.8Z" fill="#1ea0e8"/><path d="M429.6 254.3 V241.5 Q429.6 238.7 432.5 238.7 Q435.4 238.7 435.4 241.5 V254.3Z" fill="#1db48c"/><rect x="429.6" y="260.2" width="5.8" height="15.600000000000023" fill="#1db48c"/><rect x="429.6" y="281.1" width="5.8" height="16.099999999999966" fill="#1db48c"/><rect x="429.6" y="302" width="5.8" height="13.5" fill="#1db48c"/><path d="M424 315 H440 L432.3 330.3Z" fill="#1db48c"/><polyline points="18.5,497 18.5,341.2 103.4,341.2 103.4,497" fill="none" stroke="#5a7c5a" stroke-width="1"/><circle cx="66.6" cy="383.3" r="13.4" fill="none" stroke="#a88248" stroke-width="0.8"/><circle cx="67.5" cy="381.9" r="10" fill="none" stroke="#a88248" stroke-width="0.8"/><circle cx="50.4" cy="406.8" r="10" fill="none" stroke="#a88248" stroke-width="0.8"/><circle cx="51" cy="405.7" r="6.6" fill="none" stroke="#a88248" stroke-width="0.8"/><polygon points="71.34968371993368,374.13407217739154 47.84968371993367,406.9340721773915 49.15031628006633,407.86592782260846 72.65031628006632,375.0659278226085" fill="none" stroke="#a88248" stroke-width=".7"/><circle cx="714.5" cy="383.2" r="13.2" fill="none" stroke="#a88248" stroke-width="0.8"/><circle cx="713.7" cy="381.9" r="9.6" fill="none" stroke="#a88248" stroke-width="0.8"/><circle cx="731.5" cy="406.8" r="10.4" fill="none" stroke="#a88248" stroke-width="0.8"/><circle cx="730" cy="405.3" r="6.4" fill="none" stroke="#a88248" stroke-width="0.8"/><polygon points="708.0912863466514,375.0539783286592 731.0412863466514,408.35397832865914 732.3587136533487,407.4460216713408 709.4087136533486,374.14602167134086" fill="none" stroke="#a88248" stroke-width=".7"/><path d="M39.9 458 V408 M36.8 414 L39.9 408 L43 414 M39.9 458 H87 M81 455 L87.5 458 L81 461" fill="none" stroke="#e8e8e8" stroke-width=".9"/><path d="M36.5 399.4 L39.9 403.5 L43.3 399.4 M39.9 403.5 V406.8" fill="none" stroke="#e8e8e8" stroke-width=".8"/><path d="M90.5 453.5 L98.5 462.5 M98.5 453.5 L90.5 462.5" stroke="#e8e8e8" stroke-width=".9"/><rect x="36.6" y="454.6" width="6.899999999999999" height="7.2999999999999545" fill="none" stroke="#e8e8e8" stroke-width="0.9"/><polyline points="22.3,497 22.3,453 33.4,453 33.4,449.4 39.7,449.4 39.7,497" fill="none" stroke="#a88248" stroke-width="1"/><polyline points="25.4,497 25.4,462.4 39.7,462.4" fill="none" stroke="#a88248" stroke-width="1"/><path d="M27 465 H38 V473 H27Z M27 476 H38 V483 H27Z M30 465 V473 M34 465 V473 M29 487 L33 484 L37 486 V497 M31 490 V497" fill="none" stroke="#c08a48" stroke-width=".7"/><polyline points="43.3,497 43.3,468.6 59,468.6 63,472.3 96,472.3 96,497" fill="none" stroke="#a88248" stroke-width="1"/><polyline points="60,497 60,469" fill="none" stroke="#a88248" stroke-width="1"/><polyline points="83,497 83,477.3 91.8,477.3 91.8,497" fill="none" stroke="#a88248" stroke-width="1"/><polyline points="677.3,497 677.3,341.4 762.3,341.4 762.3,497" fill="none" stroke="#5a7c5a" stroke-width="1"/><polyline points="741.3,497 741.3,449.3 747.8,449.3 747.8,452.7 758.6,452.7 758.6,497" fill="none" stroke="#a88248" stroke-width="1"/><polyline points="741.3,462.4 755.7,462.4 755.7,497" fill="none" stroke="#a88248" stroke-width="1"/><path d="M743 465 H754 V474.5 H743Z M743 478 H754 V484.5 H743Z M746 465 V474.5 M750 465 V474.5 M744 497 V488 L748 486 L752 489 V497" fill="none" stroke="#a88248" stroke-width=".7"/><polyline points="685.2,497 685.2,472.4 714,472.4 717.5,469 737.5,469 737.5,497" fill="none" stroke="#a88248" stroke-width="1"/><polyline points="717.5,497 717.5,471" fill="none" stroke="#a88248" stroke-width="1"/><polyline points="720.5,497 720.5,469.5" fill="none" stroke="#a88248" stroke-width="1"/><polyline points="689.3,497 689.3,477.5 699,477.5 699,497" fill="none" stroke="#a88248" stroke-width="1"/><path d="M781.5 497 Q782 489 788 490.5 L792 494 M790 497 Q793 491 798 492 L806 496" fill="none" stroke="#a88248" stroke-width=".8"/><rect x="151.2" y="401.488" width="48.127500000000026" height="62.868" rx="1" fill="none" stroke="#a88248" stroke-width=".75"/><rect x="153.9945" y="394" width="39.43350000000001" height="7.488" rx="3" fill="none" stroke="#a88248" stroke-width=".75"/><rect x="153.9945" y="464.356" width="39.43350000000001" height="7.644" rx="3" fill="none" stroke="#a88248" stroke-width=".75"/><path d="M199.32750000000001 401.488 L202.122 400.63 Q224.478 433.0 202.122 465.37 L199.32750000000001 464.356" fill="none" stroke="#a88248" stroke-width=".75"/><path d="M199.32750000000001 404.92 Q214.8525 433.0 199.32750000000001 461.08" fill="none" stroke="#a88248" stroke-width=".75"/><rect x="581.24" y="400.9224" width="48.360000000000014" height="63.99639999999999" rx="1" fill="none" stroke="#a88248" stroke-width=".75"/><rect x="587.168" y="393.3" width="39.624000000000024" height="7.622399999999998" rx="3" fill="none" stroke="#a88248" stroke-width=".75"/><rect x="587.168" y="464.9188" width="39.624000000000024" height="7.781199999999998" rx="3" fill="none" stroke="#a88248" stroke-width=".75"/><path d="M581.24 400.9224 L578.432 400.04900000000004 Q555.9680000000001 433.0 578.432 465.951 L581.24 464.9188" fill="none" stroke="#a88248" stroke-width=".75"/><path d="M581.24 404.416 Q565.6400000000001 433.0 581.24 461.584" fill="none" stroke="#a88248" stroke-width=".75"/></g></svg>
<div class="a" style="left:0;top:101px;width:811px;height:396px;overflow:hidden"><div class="t" style="left:-67.3px;top:153.3px;font-size:51px;line-height:51px;font-weight:bold;color:#fff;-webkit-text-stroke:.5px #fff;transform:scaleX(.81);transform-origin:0 0">ACCOUNTING</div><div class="t" style="left:627px;top:151.3px;font-size:51px;line-height:51px;font-weight:bold;color:#fff;-webkit-text-stroke:.5px #fff;transform:scaleX(.81);transform-origin:0 0">ACCOUNTING</div></div>
<div class="a" style="left:163.7px;top:176.5px;width:521px;height:56px;background:#fbfbfb;border:1px solid #d8d8d8;box-shadow:0 0 1px #888;"></div>
<div class="a" style="left:252.3px;top:178px;width:1px;height:54px;background:#e4e4e4;"></div>
<div class="a" style="left:280.3px;top:178px;width:1px;height:54px;background:#e4e4e4;"></div>
<div class="a" style="left:307.2px;top:178px;width:1px;height:54px;background:#e4e4e4;"></div>
<div class="a" style="left:343.4px;top:178px;width:1px;height:54px;background:#e4e4e4;"></div>
<div class="a" style="left:446.2px;top:178px;width:1px;height:54px;background:#e4e4e4;"></div>
<div class="a" style="left:527.3px;top:178px;width:1px;height:54px;background:#e4e4e4;"></div>
<div class="a" style="left:615.8px;top:178px;width:1px;height:54px;background:#e4e4e4;"></div>
<div class="a" style="left:653.4px;top:178px;width:1px;height:54px;background:#e4e4e4;"></div>
<div class="a" style="left:166px;top:221px;width:84.5px;height:1px;background:#e2e2e2;"></div>
<div class="a" style="left:254px;top:221px;width:24.5px;height:1px;background:#e2e2e2;"></div>
<div class="a" style="left:282px;top:221px;width:23.5px;height:1px;background:#e2e2e2;"></div>
<div class="a" style="left:309px;top:221px;width:33px;height:1px;background:#e2e2e2;"></div>
<div class="a" style="left:345px;top:221px;width:99.5px;height:1px;background:#e2e2e2;"></div>
<div class="a" style="left:448px;top:221px;width:78px;height:1px;background:#e2e2e2;"></div>
<div class="a" style="left:529px;top:221px;width:85px;height:1px;background:#e2e2e2;"></div>
<div class="a" style="left:617.5px;top:221px;width:34.5px;height:1px;background:#e2e2e2;"></div>
<div class="a" style="left:655px;top:221px;width:28px;height:1px;background:#e2e2e2;"></div>
<div class="t" style="left:177.10px;top:207.30px;font-size:7px;line-height:7px;color:#444;transform:scaleX(0.577);">Save</div>
<div class="t" style="left:201.70px;top:207.30px;font-size:7px;line-height:7px;color:#444;transform:scaleX(0.609);">Save as</div>
<div class="t" style="left:226.80px;top:207.30px;font-size:7px;line-height:7px;color:#444;transform:scaleX(0.640);">Test Block</div>
<div class="t" style="left:261.70px;top:207.30px;font-size:7px;line-height:7px;color:#444;transform:scaleX(0.658);">Point</div>
<div class="t" style="left:287.10px;top:207.30px;font-size:7px;line-height:7px;color:#444;transform:scaleX(0.672);">Stretch</div>
<div class="t" style="left:314.00px;top:207.30px;font-size:7px;line-height:7px;color:#444;transform:scaleX(0.700);">Point Move</div>
<div class="t" style="left:537.40px;top:207.30px;font-size:7px;line-height:7px;color:#444;transform:scaleX(0.672);">Delete</div>
<div class="t" style="left:561.90px;top:207.30px;font-size:7px;line-height:7px;color:#444;transform:scaleX(0.638);">Base Point</div>
<div class="t" style="left:567.30px;top:213.70px;font-size:7px;line-height:7px;color:#444;transform:scaleX(0.617);">Cycle</div>
<div class="t" style="left:592.30px;top:207.30px;font-size:7px;line-height:7px;color:#444;transform:scaleX(0.701);">Options</div>
<div class="t" style="left:622.70px;top:207.30px;font-size:7px;line-height:7px;color:#444;transform:scaleX(0.674);">Define Block</div>
<div class="t" style="left:625.00px;top:213.70px;font-size:7px;line-height:7px;color:#444;transform:scaleX(0.693);">Attribute...</div>
<div class="t" style="left:664.90px;top:207.30px;font-size:7px;line-height:7px;color:#444;transform:scaleX(0.648);">Close</div>
<div class="t" style="left:351.50px;top:207.30px;font-size:7px;line-height:7px;color:#b4b4b4;transform:scaleX(0.688);">Visibility</div>
<div class="t" style="left:352.60px;top:213.90px;font-size:7px;line-height:7px;color:#b4b4b4;transform:scaleX(0.592);">States...</div>
<div class="t" style="left:204.90px;top:223.70px;font-size:7px;line-height:7px;color:#555;transform:scaleX(0.595);">Save</div>
<div class="t" style="left:257.80px;top:223.70px;font-size:7px;line-height:7px;color:#555;transform:scaleX(0.641);">Elements</div>
<div class="t" style="left:285.60px;top:223.70px;font-size:7px;line-height:7px;color:#555;transform:scaleX(0.677);">Activities</div>
<div class="t" style="left:312.70px;top:223.70px;font-size:7px;line-height:7px;color:#555;transform:scaleX(0.663);">Element Sets</div>
<div class="t" style="left:381.70px;top:223.70px;font-size:7px;line-height:7px;color:#555;transform:scaleX(0.662);">Display State</div>
<div class="t" style="left:476.40px;top:223.70px;font-size:7px;line-height:7px;color:#555;transform:scaleX(0.688);">Geometric</div>
<div class="t" style="left:564.00px;top:223.70px;font-size:7px;line-height:7px;color:#555;transform:scaleX(0.692);">Manage</div>
<div class="t" style="left:620.20px;top:223.70px;font-size:7px;line-height:7px;color:#555;transform:scaleX(0.705);">Block Attribute</div>
<div class="t" style="left:664.90px;top:223.70px;font-size:7px;line-height:7px;color:#555;transform:scaleX(0.648);">Close</div>
<svg class="a" style="left:0px;top:0px;" width="1024" height="576" viewBox="0 0 1024 576"><rect x="175.5" y="186.5" width="10" height="9" fill="#fff" stroke="#8aa0b8" stroke-width=".8"/><path d="M177.5 193.5 L178.7 188.5 L179.9 193.5 M178.0 191.5 H179.5" fill="none" stroke="#2a7ac8" stroke-width=".7"/><circle cx="182.5" cy="189.3" r="1.3" fill="none" stroke="#2a7ac8" stroke-width=".7"/><rect x="181.5" y="192.5" width="6" height="6" fill="#3a90d8"/><rect x="182.5" y="194.5" width="4" height="3" fill="#cde"/><rect x="203.5" y="186.5" width="10" height="9" fill="#fff" stroke="#8aa0b8" stroke-width=".8"/><path d="M205.5 193.5 L206.7 188.5 L207.9 193.5 M206.0 191.5 H207.5" fill="none" stroke="#2a7ac8" stroke-width=".7"/><circle cx="210.5" cy="189.3" r="1.3" fill="none" stroke="#2a7ac8" stroke-width=".7"/><rect x="208.5" y="194" width="8" height="4.5" fill="#fff" stroke="#333" stroke-width="1"/><path d="M210 196.2 H215" stroke="#555" stroke-dasharray="1,.6"/><rect x="231" y="186.5" width="10" height="9" fill="#fff" stroke="#8aa0b8" stroke-width=".8"/><path d="M233 193.5 L234.2 188.5 L235.4 193.5 M233.5 191.5 H235" fill="none" stroke="#2a7ac8" stroke-width=".7"/><circle cx="238" cy="189.3" r="1.3" fill="none" stroke="#2a7ac8" stroke-width=".7"/><path d="M237 195.5 L239 197.5 L242.5 193" fill="none" stroke="#30a050" stroke-width="1.3"/><circle cx="267.2" cy="187.3" r="1.8" fill="#e8b020" stroke="#6a5010" stroke-width=".6"/><path d="M267.2 189 Q267.5 193 265.5 195 L264.7 199" fill="none" stroke="#444" stroke-width="1"/><rect x="286.1" y="184.7" width="6" height="11.8" fill="#7a8a9a" stroke="#444" stroke-width=".6"/><rect x="287.5" y="186" width="2" height="9" fill="#bcc8d4"/><rect x="292" y="185" width="6.5" height="5" fill="#fff" stroke="#3a90d8" stroke-width=".6"/><path d="M293.5 187.5 H297 M295.8 186.3 L297 187.5 L295.8 188.7" stroke="#1a70c0" stroke-width=".7" fill="none"/><path d="M298 190.5 L295 195.5 H297.5 L295.5 199.5 L300.5 194 H298 L300 190.5Z" fill="#f0c020" stroke="#8a6a10" stroke-width=".4"/><circle cx="325.2" cy="187.3" r="1.8" fill="#e8b020" stroke="#6a5010" stroke-width=".6"/><path d="M325.2 189 Q325.5 193 323.5 195 L322.7 199" fill="none" stroke="#444" stroke-width="1"/><path d="M331 189.5 L328 194.5 H330.5 L328.5 198.5 L333.5 193 H331 L333 189.5Z" fill="#f0c020" stroke="#8a6a10" stroke-width=".4"/><path d="M265.7 217 H268.3 L267 218.5Z" fill="#333"/><path d="M293.2 217 H295.8 L294.5 218.5Z" fill="#333"/><path d="M325.3 217 H327.90000000000003 L326.6 218.5Z" fill="#333"/><rect x="353.5" y="187.7" width="12.7" height="10.7" fill="#fafafa" stroke="#d0d0d0" stroke-width=".8"/><rect x="357" y="190.5" width="6" height="5" fill="none" stroke="#ccc" stroke-width=".6"/><circle cx="381.8" cy="185.7" r="3.3" fill="#e4e4e4"/><rect x="378.5" y="185.2" width="6.6" height="1" fill="#fff"/><circle cx="397.5" cy="185.7" r="3.3" fill="#e4e4e4"/><rect x="409.7" y="182.5" width="6.5" height="6.5" rx="1.5" fill="#eeeeee"/><rect x="374.4" y="195.1" width="69.4" height="9.8" fill="#e6e6e6" stroke="#bcc0d0" stroke-width=".8"/><rect x="436" y="195.6" width="7.4" height="8.8" fill="#d8d8d8"/><rect x="451.3" y="180.1" width="3" height="3" fill="none" stroke="#3a88c8" stroke-width=".8"/><rect x="456.6" y="185.1" width="3.3" height="3.3" fill="none" stroke="#333" stroke-width=".9"/><line x1="453.3" y1="182.1" x2="457.8" y2="186.6" stroke="#333" stroke-width=".8"/><path d="M467.3 181.6 H475.3 M469.3 183.1 V187.6 M473.3 183.1 V187.6" stroke="#333" stroke-width=".9"/><path d="M468.3 183.6 L469.3 182.6 L470.3 183.6 M472.3 183.6 L473.3 182.6 L474.3 183.6" fill="none" stroke="#3a88c8" stroke-width=".6"/><circle cx="486.6" cy="184.6" r="4.6" fill="none" stroke="#333" stroke-width=".8"/><circle cx="486.6" cy="184.6" r="3" fill="none" stroke="#3a88c8" stroke-width="1"/><path d="M500.09999999999997 183.6 V181.6 Q500.09999999999997 179.6 501.9 179.6 Q503.7 179.6 503.7 181.6 V183.6" fill="none" stroke="#333" stroke-width=".9"/><rect x="498.9" y="183.6" width="6" height="5" fill="#333"/><path d="M514.2 180.1 H522.2 M514.2 181.6 H522.2" stroke="#3a88c8" stroke-width=".8"/><rect x="514.2" y="184.29999999999998" width="4" height="3.8" fill="#333"/><path d="M515.0 184.29999999999998 V183.29999999999998 Q516.2 181.79999999999998 517.4000000000001 183.29999999999998 V184.29999999999998" fill="none" stroke="#333" stroke-width=".7"/><path d="M519.7 185.6 H522.2 M519.7 187.6 H522.2" stroke="#30a050" stroke-width=".9"/><path d="M451.8 200.2 L456.8 195.2 M452.8 202.2 L458.8 196.2 M454.8 203.2 L459.8 198.2" stroke="#3a88c8" stroke-width="1"/><path d="M451.3 200.7 L457.3 194.7" stroke="#333" stroke-width=".6"/><path d="M466.8 195.2 L471.3 199.7 L475.8 195.2 M471.3 199.7 L468.3 203.7" fill="none" stroke="#3a88c8" stroke-width="1"/><path d="M482.6 196.2 H490.6 M482.6 199.2 H490.6 M482.6 202.2 H490.6" stroke="#333" stroke-width=".7"/><path d="M483.6 197.7 H489.6 M483.6 200.7 H489.6" stroke="#3a88c8" stroke-width=".7"/><path d="M498.9 195.2 V203.2 M501.9 195.2 V203.2 M504.9 195.2 V203.2" stroke="#333" stroke-width=".8"/><path d="M497.4 197.2 V202.2 M506.4 197.2 V202.2" stroke="#c04040" stroke-width=".8"/><path d="M514.2 194.7 H522.2 M514.2 196.2 H522.2" stroke="#3a88c8" stroke-width=".8"/><rect x="514.2" y="198.89999999999998" width="4" height="3.8" fill="#333"/><path d="M515.0 198.89999999999998 V197.89999999999998 Q516.2 196.39999999999998 517.4000000000001 197.89999999999998 V198.89999999999998" fill="none" stroke="#333" stroke-width=".7"/><circle cx="520.8000000000001" cy="201.0" r="1.9" fill="#30a050"/><circle cx="454.8" cy="212.8" r="3.6" fill="none" stroke="#333" stroke-width=".9"/><path d="M452.8 218.3 L460.3 211.8" stroke="#3a88c8" stroke-width=".9"/><rect x="470.3" y="210.3" width="5" height="5" fill="none" stroke="#333" stroke-width=".9"/><path d="M466.8 217.3 L471.3 212.8 M474.3 216.8 L476.3 209.8" stroke="#3a88c8" stroke-width=".8"/><path d="M485.6 209.3 A4.5 4.5 0 0 0 485.6 218.3 M487.6 209.3 A4.5 4.5 0 0 1 487.6 218.3" fill="none" stroke="#333" stroke-width=".9"/><path d="M486.6 208.8 V218.8" stroke="#3a88c8" stroke-width=".9" stroke-dasharray="1.5,1"/><path d="M498.9 210.3 H497.4 V217.3 H498.9 M504.9 210.3 H506.4 V217.3 H504.9" fill="none" stroke="#3a88c8" stroke-width=".9"/><path d="M499.9 213.8 H503.9" stroke="#333" stroke-width="1.2"/><path d="M514.2 209.3 H522.2 M514.2 210.8 H522.2" stroke="#3a88c8" stroke-width=".8"/><rect x="514.2" y="213.5" width="4" height="3.8" fill="#333"/><path d="M515.0 213.5 V212.5 Q516.2 211.0 517.4000000000001 212.5 V213.5" fill="none" stroke="#333" stroke-width=".7"/><circle cx="520.8000000000001" cy="215.60000000000002" r="1.7" fill="#aaa"/><path d="M537.5 184.5 V188 M537.5 186.2 H541.5 M544 185 H550.5 M544 188 H550.5" stroke="#3a90d8" stroke-width=".9"/><rect x="537" y="192.5" width="6" height="5.5" fill="#222"/><path d="M538.2 192.5 V191 Q540 188.5 541.8 191 V192.5" fill="none" stroke="#222" stroke-width="1"/><path d="M545 192 L550 197.5 M550 192 L545 197.5" stroke="#d04050" stroke-width="1.1"/><path d="M567 199 V184.5" stroke="#111" stroke-width="1.2"/><path d="M567.5 184.5 H579 L576.5 188 L579 191.5 H567.5Z" fill="#2a88d0"/><rect x="593.5" y="185.5" width="10" height="9" fill="#fff" stroke="#8aa0b8" stroke-width=".8"/><path d="M595.5 192.5 L596.7 187.5 L597.9 192.5 M596.0 190.5 H597.5" fill="none" stroke="#2a7ac8" stroke-width=".7"/><circle cx="600.5" cy="188.3" r="1.3" fill="none" stroke="#2a7ac8" stroke-width=".7"/><circle cx="604.5" cy="195.5" r="2.8" fill="#222"/><circle cx="604.5" cy="195.5" r="1" fill="#fff"/><path d="M628.5 199 V188.5 L631.5 185.5 L634.5 188.5 V199Z" fill="#f4f4f4" stroke="#444" stroke-width=".9"/><circle cx="631.5" cy="189.5" r=".9" fill="#222"/><rect x="629.8" y="193" width="3.4" height="3" fill="#999"/><rect x="637" y="187" width="2.4" height="10.5" fill="#f0c020" stroke="#8a6a10" stroke-width=".4"/><path d="M637 197.5 L638.2 199.5 L639.4 197.5Z" fill="#333"/><path d="M664.5 187 L675.5 198.5 M675.5 187 L664.5 198.5" stroke="#d84a58" stroke-width="1.2"/></svg>
<div class="a" style="left:811px;top:86px;width:213px;height:421px;background:#f0f0f0;"></div>
<div class="a" style="left:811px;top:86px;width:1px;height:421px;background:#e0e0e0;"></div>
<div class="a" style="left:812px;top:86px;width:2px;height:421px;background:#a4a4a4;"></div>
<div class="a" style="left:1000px;top:86px;width:13px;height:420px;background:#c0c0c0;border:none;border-left:1px solid #999;border-right:1px solid #9c9c9c;"></div>
<div class="a" style="left:986.3px;top:132px;width:7.6px;height:338px;background:#d8d8d8;"></div>
<svg class="a" style="left:0px;top:0px;" width="1024" height="576" viewBox="0 0 1024 576"><rect x="819.7" y="92.2" width="174.0999999999999" height="10.0" fill="#fff" stroke="#b8b8b8" stroke-width="1"/><rect x="985.8" y="92.8" width="7.4" height="8.8" fill="#dedede" stroke="#8a8a8a" stroke-width=".8"/><path d="M987.8 96.2 H991.1999999999999 L989.5 98.2Z" fill="#111"/><rect x="820" y="106.3" width="13.5" height="12.4" rx="1" fill="#e8e8e8" stroke="#a0a0a0" stroke-width=".8"/><rect x="838.3" y="106.3" width="13.5" height="12.4" rx="1" fill="#e8e8e8" stroke="#a0a0a0" stroke-width=".8"/><rect x="855.5" y="106.3" width="13.5" height="12.4" rx="1" fill="#e8e8e8" stroke="#a0a0a0" stroke-width=".8"/><rect x="873" y="106.3" width="13.5" height="12.4" rx="1" fill="#e8e8e8" stroke="#a0a0a0" stroke-width=".8"/><rect x="890.3" y="106.3" width="13.5" height="12.4" rx="1" fill="#e8e8e8" stroke="#a0a0a0" stroke-width=".8"/><circle cx="826" cy="113" r="3" fill="none" stroke="#e0a030" stroke-width="1.2"/><circle cx="828" cy="111.5" r="2.5" fill="none" stroke="#3a90d8" stroke-width="1"/><path d="M829 109 L832 107.5" stroke="#30a050" stroke-width="1"/><path d="M841 109 V116 M843 110 L848 114.5 H845.5 L847 117 L845.8 117.5 L844.5 115 L843 116.5Z" fill="#fff" stroke="#333" stroke-width=".6"/><path d="M840.5 108.5 H843" stroke="#aaa" stroke-width=".8"/><rect x="857.5" y="108.5" width="9" height="8.5" fill="none" stroke="#3a90d8" stroke-width=".8" stroke-dasharray="1.2,1"/><path d="M860.5 110.5 L865.5 114.5 H863.2 L864.5 117 L863.3 117.5 L862.2 115 L860.5 116.5Z" fill="#fff" stroke="#333" stroke-width=".6"/><rect x="875" y="108.5" width="1" height="1" fill="#3a90d8"/><path d="M877 109 H884" stroke="#3a90d8" stroke-width=".8"/><rect x="875" y="111.3" width="1" height="1" fill="#3a90d8"/><path d="M877 111.8 H883" stroke="#3a90d8" stroke-width=".8"/><rect x="875" y="114.1" width="1" height="1" fill="#3a90d8"/><path d="M877 114.6 H880" stroke="#3a90d8" stroke-width=".8"/><path d="M882 112.5 L885.5 112.5 L884 115 L885.8 114.8 L882.6 118.5 L883.3 115.8 L881.8 116Z" fill="#e8b020" stroke="#8a6a10" stroke-width=".3"/><path d="M894.5 110.5 Q894.5 108 897.2 108 Q900 108 900 110.5 Q900 112 897.5 113 V114.5" fill="none" stroke="#222" stroke-width="1.3"/><rect x="896.6" y="115.5" width="1.8" height="1.8" fill="#222"/><rect x="820" y="123.7" width="159.7" height="9.899999999999991" fill="#e4e4f6" stroke="#c0c0dc" stroke-width="1"/><path d="M971.5 130.4 L974 127.4 L976.5 130.4Z" fill="#111"/><rect x="820" y="244.1" width="159.7" height="10.400000000000006" fill="#e4e4f6" stroke="#c0c0dc" stroke-width="1"/><path d="M971.5 250.8 L974 247.8 L976.5 250.8Z" fill="#111"/><rect x="820" y="347.2" width="159.7" height="10.400000000000034" fill="#e4e4f6" stroke="#c0c0dc" stroke-width="1"/><path d="M971.5 354.3 L974 351.3 L976.5 354.3Z" fill="#111"/><rect x="820" y="434.9" width="159.7" height="10.400000000000034" fill="#e4e4f6" stroke="#c0c0dc" stroke-width="1"/><path d="M971.5 442.0 L974 439.0 L976.5 442.0Z" fill="#111"/><rect x="841.5" y="140.9" width="138.0" height="12.400000000000006" fill="#fff" stroke="#b8b8b8" stroke-width="1"/><rect x="841.5" y="155.4" width="138.0" height="9.299999999999983" fill="#fff" stroke="#b8b8b8" stroke-width="1"/><rect x="971.5" y="156.0" width="7.4" height="8.099999999999984" fill="#dedede" stroke="#8a8a8a" stroke-width=".8"/><path d="M973.5 159.05 H976.9 L975.2 161.05Z" fill="#111"/><rect x="841.5" y="167.2" width="138.0" height="9.5" fill="#fff" stroke="#b8b8b8" stroke-width="1"/><rect x="971.5" y="167.79999999999998" width="7.4" height="8.3" fill="#dedede" stroke="#8a8a8a" stroke-width=".8"/><path d="M973.5 170.95 H976.9 L975.2 172.95Z" fill="#111"/><rect x="841.5" y="178.7" width="138.0" height="11.600000000000023" fill="#fff" stroke="#b8b8b8" stroke-width="1"/><rect x="841.5" y="192.8" width="138.0" height="9.899999999999977" fill="#fff" stroke="#b8b8b8" stroke-width="1"/><rect x="971.5" y="193.4" width="7.4" height="8.699999999999978" fill="#dedede" stroke="#8a8a8a" stroke-width=".8"/><path d="M973.5 196.75 H976.9 L975.2 198.75Z" fill="#111"/><rect x="841.5" y="204.8" width="138.0" height="9.699999999999989" fill="#fff" stroke="#b8b8b8" stroke-width="1"/><rect x="971.5" y="205.4" width="7.4" height="8.49999999999999" fill="#dedede" stroke="#8a8a8a" stroke-width=".8"/><path d="M973.5 208.65 H976.9 L975.2 210.65Z" fill="#111"/><rect x="841.5" y="216" width="138.0" height="12" fill="#fff" stroke="#b8b8b8" stroke-width="1"/><rect x="841.5" y="230" width="138.0" height="9.599999999999994" fill="#ebebeb" stroke="#c4c4c4" stroke-width="1"/><line x1="971.5" y1="230.5" x2="971.5" y2="239.1" stroke="#d0d0d0" stroke-width=".8"/><path d="M973.9 234.0 L975.5 235.60000000000002 L977.1 234.0" fill="none" stroke="#aaa" stroke-width=".6"/><rect x="841.5" y="261.4" width="138.0" height="12.0" fill="#fff" stroke="#b8b8b8" stroke-width="1"/><rect x="841.5" y="275.5" width="138.0" height="11.800000000000011" fill="#fff" stroke="#b8b8b8" stroke-width="1"/><rect x="841.5" y="289.3" width="138.0" height="12.0" fill="#fff" stroke="#b8b8b8" stroke-width="1"/><rect x="841.5" y="303.4" width="138.0" height="12.0" fill="#fff" stroke="#b8b8b8" stroke-width="1"/><rect x="841.5" y="317.3" width="138.0" height="12.0" fill="#fff" stroke="#b8b8b8" stroke-width="1"/><rect x="841.5" y="331.2" width="138.0" height="12.0" fill="#fff" stroke="#b8b8b8" stroke-width="1"/><rect x="841.5" y="365.3" width="138.0" height="12.0" fill="#fff" stroke="#b8b8b8" stroke-width="1"/><rect x="841.5" y="379.8" width="138.0" height="8.899999999999977" fill="#ebebeb" stroke="#c4c4c4" stroke-width="1"/><line x1="971.5" y1="380.3" x2="971.5" y2="388.2" stroke="#d0d0d0" stroke-width=".8"/><path d="M973.9 383.45 L975.5 385.05 L977.1 383.45" fill="none" stroke="#aaa" stroke-width=".6"/><rect x="841.5" y="390.7" width="138" height="11.800000000000011" fill="#aacbf0" stroke="#c8d8ec" stroke-width=".8"/><rect x="841.5" y="404.2" width="138" height="12.400000000000034" fill="#aacbf0" stroke="#c8d8ec" stroke-width=".8"/><rect x="841.5" y="418.3" width="138" height="12.399999999999977" fill="#aacbf0" stroke="#c8d8ec" stroke-width=".8"/><rect x="879.3" y="452.5" width="100.20000000000005" height="10.199999999999989" fill="#fff" stroke="#b8b8b8" stroke-width="1"/><rect x="971.5" y="453.1" width="7.4" height="8.99999999999999" fill="#dedede" stroke="#8a8a8a" stroke-width=".8"/><path d="M973.5 456.6 H976.9 L975.2 458.6Z" fill="#111"/><rect x="879.3" y="464.3" width="100.20000000000005" height="10.0" fill="#fff" stroke="#b8b8b8" stroke-width="1"/><rect x="971.5" y="464.90000000000003" width="7.4" height="8.8" fill="#dedede" stroke="#8a8a8a" stroke-width=".8"/><path d="M973.5 468.3 H976.9 L975.2 470.3Z" fill="#111"/><rect x="879.3" y="476.3" width="100.20000000000005" height="10.199999999999989" fill="#fff" stroke="#b8b8b8" stroke-width="1"/><rect x="971.5" y="476.90000000000003" width="7.4" height="8.99999999999999" fill="#dedede" stroke="#8a8a8a" stroke-width=".8"/><path d="M973.5 480.4 H976.9 L975.2 482.4Z" fill="#111"/><rect x="879.3" y="488.1" width="100.20000000000005" height="9.799999999999955" fill="#fff" stroke="#b8b8b8" stroke-width="1"/><rect x="971.5" y="488.70000000000005" width="7.4" height="8.599999999999955" fill="#dedede" stroke="#8a8a8a" stroke-width=".8"/><path d="M973.5 492.0 H976.9 L975.2 494.0Z" fill="#111"/><path d="M825 150 L832 143 M826.5 151.5 L833.5 144.5" stroke="#3a90d8" stroke-width="1.6"/><path d="M824 149 L826 151 M831 142 L834 145" stroke="#3a90d8" stroke-width="1"/><path d="M824.5 162.3 L829 160.3 L833.5 162.3 L829 164.3Z" fill="#e0a818" stroke="#7a5a10" stroke-width=".6"/><path d="M824.5 159.5 L829 157.5 L833.5 159.5 L829 161.5Z" fill="#f6cc40" stroke="#7a5a10" stroke-width=".6"/><path d="M824.5 171 L828.5 167 L832.5 171 L828.5 175Z" fill="#4a6a80"/><circle cx="832.5" cy="174" r="1.7" fill="#2a8ad8"/><path d="M824 180.5 H834 M824 183 H834 M824 186 H834 M824 188.5 H834" stroke="#999" stroke-width=".7" stroke-dasharray="1.5,.8"/><path d="M824 193.5 H834" stroke="#444" stroke-width=".7"/><path d="M824 196.5 H834 M824 199.5 H834" stroke="#555" stroke-width=".8" stroke-dasharray="2,1"/><path d="M824 202 H834" stroke="#777" stroke-width=".6" stroke-dasharray="3,1"/><rect x="823.5" y="204.5" width="10.5" height="1.8" fill="#222"/><rect x="823.5" y="207.5" width="10.5" height="1.6" fill="#333"/><rect x="823.5" y="210.5" width="10.5" height="1.3" fill="#333"/><rect x="823.5" y="213" width="10.5" height="1" fill="#444"/><rect x="824.0" y="217.5" width="3.3" height="3.3" fill="#7890a8"/><rect x="824.0" y="224.1" width="3.3" height="3.3" fill="#7890a8"/><rect x="827.3" y="220.8" width="3.3" height="3.3" fill="#7890a8"/><rect x="830.6" y="217.5" width="3.3" height="3.3" fill="#7890a8"/><rect x="830.6" y="224.1" width="3.3" height="3.3" fill="#7890a8"/><rect x="824" y="231" width="2" height="8" fill="#d03030"/><rect x="827.3" y="231" width="2" height="8" fill="#30a040"/><path d="M831.5 231 V239" stroke="#3090d0" stroke-width="1.2" stroke-dasharray="1,.6"/><rect x="825" y="262.0" width="9" height="7" fill="#cfe0f0" stroke="#6a8ab0" stroke-width=".6"/><circle cx="831" cy="264.0" r="1.3" fill="#2a7ac8"/><path d="M826.5 267.5 L827.5 263.5 L828.5 267.5" fill="none" stroke="#2a7ac8" stroke-width=".6"/><circle cx="825" cy="270.5" r="1.2" fill="#333"/><text x="830" y="272.5" font-size="3.5" fill="#555" font-family="Liberation Sans">x</text><rect x="825" y="275.9" width="9" height="7" fill="#cfe0f0" stroke="#6a8ab0" stroke-width=".6"/><circle cx="831" cy="277.9" r="1.3" fill="#2a7ac8"/><path d="M826.5 281.4 L827.5 277.4 L828.5 281.4" fill="none" stroke="#2a7ac8" stroke-width=".6"/><circle cx="825" cy="284.4" r="1.2" fill="#333"/><text x="830" y="286.4" font-size="3.5" fill="#555" font-family="Liberation Sans">y</text><rect x="825" y="289.8" width="9" height="7" fill="#cfe0f0" stroke="#6a8ab0" stroke-width=".6"/><circle cx="831" cy="291.8" r="1.3" fill="#2a7ac8"/><path d="M826.5 295.3 L827.5 291.3 L828.5 295.3" fill="none" stroke="#2a7ac8" stroke-width=".6"/><circle cx="825" cy="298.3" r="1.2" fill="#333"/><text x="830" y="300.3" font-size="3.5" fill="#555" font-family="Liberation Sans">z</text><circle cx="831" cy="306.9" r="3" fill="none" stroke="#2a7ac8" stroke-width=".9"/><circle cx="826" cy="311.9" r="1.4" fill="none" stroke="#333" stroke-width=".7"/><text x="830" y="314.4" font-size="3.5" fill="#555" font-family="Liberation Sans">x</text><circle cx="831" cy="320.8" r="3" fill="none" stroke="#2a7ac8" stroke-width=".9"/><circle cx="826" cy="325.8" r="1.4" fill="none" stroke="#333" stroke-width=".7"/><text x="830" y="328.3" font-size="3.5" fill="#555" font-family="Liberation Sans">y</text><circle cx="831" cy="334.7" r="3" fill="none" stroke="#2a7ac8" stroke-width=".9"/><circle cx="826" cy="339.7" r="1.4" fill="none" stroke="#333" stroke-width=".7"/><text x="830" y="342.2" font-size="3.5" fill="#555" font-family="Liberation Sans">z</text><circle cx="829" cy="371" r="4.3" fill="none" stroke="#555" stroke-width=".9" stroke-dasharray="1.3,1"/><path d="M830.5 366.7 A4.3 4.3 0 0 1 833.3 371" fill="none" stroke="#3a90d8" stroke-width="1.2"/><text x="825.5" y="388.5" font-size="9" font-weight="bold" fill="#222" font-family="Liberation Sans">A</text><rect x="827.5" y="379" width="2" height="1.2" fill="#222"/><text x="824" y="400" font-size="5" fill="#333" font-family="Liberation Sans">x</text><path d="M827.5 400.5 V393.5 H832.5 V400.5" fill="none" stroke="#222" stroke-width="1.3"/><text x="823.5" y="410" font-size="3.6" fill="#333" font-family="Liberation Sans">inch</text><line x1="823.5" y1="411" x2="833" y2="411" stroke="#555" stroke-width=".5"/><text x="823.8" y="414.8" font-size="3.6" fill="#333" font-family="Liberation Sans">mm</text><rect x="823.5" y="420.5" width="11" height="7.5" fill="#fff" stroke="#444" stroke-width=".8"/><path d="M825.5 422.5 V426" stroke="#333" stroke-width=".7"/><path d="M987.5 129.5 L990 126.8 L992.5 129.5Z" fill="#111"/><path d="M987.5 493.5 H992.5 L990 496.2Z" fill="#111"/><path d="M1004 89 L1009 94 M1009 89 L1004 94" stroke="#222" stroke-width="1.1"/><path d="M1003.8 101 H1009.2 M1005 101 V98.5 H1008 V101 M1006.5 101 V106" stroke="#222" stroke-width="1.3" fill="none"/><rect x="1002.5" y="495.5" width="3.5" height="3.5" fill="#e8b020"/><rect x="1006" y="495" width="3" height="3" fill="#d04040"/><rect x="1003.5" y="499.5" width="3" height="3" fill="#40a050"/><rect x="1007" y="499" width="3" height="3" fill="#7a9ac0"/><rect x="1013.5" y="87.3" width="10.5" height="38.8" fill="#ececec" stroke="#b0b0b0" stroke-width=".8"/><rect x="1013.5" y="126.1" width="10.5" height="58.9" fill="#ececec" stroke="#b0b0b0" stroke-width=".8"/><rect x="1013.5" y="185" width="10.5" height="41.4" fill="#ffffff" stroke="#b0b0b0" stroke-width=".8"/></svg>
<div class="t" style="left:1000.32px;top:102.50px;width:36.57px;font-size:7px;line-height:7px;color:#333;transform-origin:50% 50%;transform:rotate(-90deg) scaleX(0.875);">HomeByMe</div>
<div class="t" style="left:989.61px;top:151.50px;width:57.98px;font-size:7px;line-height:7px;color:#333;transform-origin:50% 50%;transform:rotate(-90deg) scaleX(0.931);">3DContent Central</div>
<div class="t" style="left:1002.65px;top:203.00px;width:31.90px;font-size:7px;line-height:7px;color:#333;transform-origin:50% 50%;transform:rotate(-90deg) scaleX(0.972);">Properties</div>
<div class="t" style="left:987.95px;top:471.85px;width:37.10px;font-size:7.5px;line-height:7.5px;color:#222;transform-origin:50% 50%;transform:rotate(-90deg) scaleX(0.841);font-weight:bold;">Properties</div>
<div class="t" style="left:820.70px;top:93.40px;font-size:8px;line-height:8px;color:#222;transform:scaleX(0.707);">Block (1)</div>
<div class="t" style="left:822.80px;top:125.15px;font-size:7.5px;line-height:7.5px;color:#1a1a3a;font-weight:bold;transform:scaleX(0.852);">General</div>
<div class="t" style="left:822.80px;top:245.55px;font-size:7.5px;line-height:7.5px;color:#1a1a3a;font-weight:bold;transform:scaleX(0.863);">Geometry</div>
<div class="t" style="left:822.80px;top:349.05px;font-size:7.5px;line-height:7.5px;color:#1a1a3a;font-weight:bold;transform:scaleX(0.816);">Misc</div>
<div class="t" style="left:822.80px;top:436.75px;font-size:7.5px;line-height:7.5px;color:#1a1a3a;font-weight:bold;transform:scaleX(0.820);">Custom</div>
<div class="t" style="left:842.60px;top:156.35px;font-size:7.5px;line-height:7.5px;color:#222;transform:scaleX(0.815);">0</div>
<svg class="a" style="left:0px;top:0px;" width="1024" height="576" viewBox="0 0 1024 576"><circle cx="847.2" cy="172" r="2.3" fill="none" stroke="#444" stroke-width=".7"/><line x1="843" y1="209.3" x2="859.6" y2="209.3" stroke="#333" stroke-width=".7"/></svg>
<div class="t" style="left:852.40px;top:168.00px;font-size:8px;line-height:8px;color:#222;transform:scaleX(0.726);">ByLayer</div>
<div class="t" style="left:842.60px;top:181.15px;font-size:7.5px;line-height:7.5px;color:#222;transform:scaleX(0.789);">1.0000</div>
<div class="t" style="left:842.00px;top:194.00px;font-size:8px;line-height:8px;color:#222;transform:scaleX(0.705);">ByLayer</div>
<div class="t" style="left:871.00px;top:194.00px;font-size:8px;line-height:8px;color:#222;transform:scaleX(0.668);">Solid line</div>
<div class="t" style="left:861.30px;top:205.30px;font-size:8px;line-height:8px;color:#222;transform:scaleX(0.705);">ByLayer</div>
<div class="t" style="left:842.00px;top:218.40px;font-size:8px;line-height:8px;color:#222;transform:scaleX(0.705);">ByLayer</div>
<div class="t" style="left:842.00px;top:231.40px;font-size:8px;line-height:8px;color:#a0a0a0;transform:scaleX(0.692);">ByColor</div>
<div class="t" style="left:842.60px;top:264.45px;font-size:7.5px;line-height:7.5px;color:#222;transform:scaleX(0.784);">1500.8769</div>
<div class="t" style="left:842.60px;top:278.35px;font-size:7.5px;line-height:7.5px;color:#222;transform:scaleX(0.777);">773.9926</div>
<div class="t" style="left:842.60px;top:292.15px;font-size:7.5px;line-height:7.5px;color:#222;transform:scaleX(0.789);">0.9803</div>
<div class="t" style="left:842.60px;top:305.85px;font-size:7.5px;line-height:7.5px;color:#222;transform:scaleX(0.789);">1.0000</div>
<div class="t" style="left:842.60px;top:319.75px;font-size:7.5px;line-height:7.5px;color:#222;transform:scaleX(0.789);">1.0000</div>
<div class="t" style="left:842.60px;top:333.65px;font-size:7.5px;line-height:7.5px;color:#222;transform:scaleX(0.789);">1.0000</div>
<div class="t" style="left:842.60px;top:367.80px;font-size:7px;line-height:7px;color:#222;transform:scaleX(0.745);">0</div>
<div class="t" style="left:842.60px;top:381.00px;font-size:7px;line-height:7px;color:#a0a0a0;transform:scaleX(0.827);">No</div>
<div class="t" style="left:842.60px;top:393.05px;font-size:7.5px;line-height:7.5px;color:#222;transform:scaleX(0.789);">1.0000</div>
<div class="t" style="left:842.00px;top:406.50px;font-size:8px;line-height:8px;color:#222;transform:scaleX(0.706);">Unitless</div>
<div class="t" style="left:842.00px;top:420.40px;font-size:8px;line-height:8px;color:#222;transform:scaleX(0.727);">Porta</div>
<div class="t" style="left:824.80px;top:453.95px;font-size:7.5px;line-height:7.5px;color:#333;transform:scaleX(0.738);">Cima - Baixo</div>
<div class="t" style="left:824.80px;top:465.55px;font-size:7.5px;line-height:7.5px;color:#333;transform:scaleX(0.758);">Esquerda - Direita</div>
<div class="t" style="left:824.80px;top:477.45px;font-size:7.5px;line-height:7.5px;color:#333;transform:scaleX(0.752);">Lista de comprimento</div>
<div class="t" style="left:824.80px;top:489.45px;font-size:7.5px;line-height:7.5px;color:#333;transform:scaleX(0.759);">Lista de larguras</div>
<div class="t" style="left:880.00px;top:453.95px;font-size:7.5px;line-height:7.5px;color:#222;transform:scaleX(0.728);">Flipped</div>
<div class="t" style="left:880.00px;top:465.55px;font-size:7.5px;line-height:7.5px;color:#222;transform:scaleX(0.778);">Not flipped</div>
<div class="t" style="left:880.00px;top:477.45px;font-size:7.5px;line-height:7.5px;color:#222;transform:scaleX(0.725);">90 cm</div>
<div class="t" style="left:880.00px;top:489.45px;font-size:7.5px;line-height:7.5px;color:#222;transform:scaleX(0.725);">15 cm</div>
<div class="a" style="left:0px;top:497px;width:811px;height:10px;background:#f6f6f6;"></div>
<div class="a" style="left:0px;top:506.5px;width:1024px;height:1.2px;background:#8c8c8c;"></div>
<div class="a" style="left:0px;top:507.7px;width:1024px;height:12.8px;background:#c8c8c8;"></div>
<div class="a" style="left:0px;top:520.5px;width:1024px;height:28.5px;background:#ffffff;"></div>
<div class="a" style="left:0px;top:549px;width:1024px;height:1.4px;background:#d4d4d4;"></div>
<div class="a" style="left:0px;top:550.4px;width:1024px;height:7.6px;background:#ffffff;"></div>
<div class="a" style="left:0px;top:558px;width:1024px;height:18px;background:#f0f0f0;"></div>
<div class="a" style="left:1016px;top:521px;width:8px;height:27.5px;background:#f4f4f4;"></div>
<svg class="a" style="left:0px;top:0px;" width="1024" height="576" viewBox="0 0 1024 576"><defs><linearGradient id="sbb" x1="0" y1="0" x2="0" y2="1"><stop offset="0" stop-color="#c8e0f8"/><stop offset="1" stop-color="#90bce8"/></linearGradient><linearGradient id="sbg" x1="0" y1="0" x2="0" y2="1"><stop offset="0" stop-color="#fafafa"/><stop offset="1" stop-color="#dedede"/></linearGradient></defs><path d="M1 497.5 Q2 505.5 5 505.5 H27 Q29 505.5 30.5 500 L31.5 497.5" fill="#fff" stroke="#555" stroke-width=".8"/><path d="M30 497.5 Q32 505.5 36 505.5 H63 Q66 505.5 67.5 500 L68 497.5" fill="#e2e2e2" stroke="#666" stroke-width=".8"/><rect x="72" y="498.5" width="10.6" height="6.1" rx="1" fill="#f0f0f0" stroke="#888" stroke-width=".7"/><path d="M75 501.5 H79.6 M77.3 499.5 V503.5" stroke="#666" stroke-width=".8"/><path d="M1017.5 525.5 L1020 523 L1022.5 525.5Z" fill="#111"/><rect x="1016" y="533.5" width="8" height="5" fill="#d4d4d4"/><path d="M1017.5 542.5 H1022.5 L1020 545Z" fill="#111"/><rect x="1004" y="511.5" width="4.5" height="4" fill="none" stroke="#222" stroke-width=".8"/><rect x="1002.5" y="513" width="4.5" height="4" fill="#c8c8c8" stroke="#222" stroke-width=".8"/><path d="M1015.5 511.5 L1020 516 M1020 511.5 L1015.5 516" stroke="#222" stroke-width="1"/><rect x="3" y="523" width=".9" height=".9" fill="#888"/><rect x="3" y="525" width=".9" height=".9" fill="#888"/><rect x="3" y="530" width=".9" height=".9" fill="#888"/><rect x="3" y="532" width=".9" height=".9" fill="#888"/><rect x="3" y="537" width=".9" height=".9" fill="#888"/><rect x="3" y="539" width=".9" height=".9" fill="#888"/><rect x="3" y="544" width=".9" height=".9" fill="#888"/><rect x="3" y="546" width=".9" height=".9" fill="#888"/><rect x="3" y="553" width=".9" height=".9" fill="#888"/><rect x="3" y="555" width=".9" height=".9" fill="#888"/><rect x="374.6" y="560.8" width="12.699999999999989" height="12.2" rx="1.5" fill="url(#sbg)" stroke="#a8a8a8" stroke-width=".8"/><rect x="392.2" y="560.8" width="13.5" height="12.2" rx="1.5" fill="url(#sbg)" stroke="#a8a8a8" stroke-width=".8"/><rect x="410.4" y="560.8" width="13.100000000000023" height="12.2" rx="1.5" fill="url(#sbg)" stroke="#a8a8a8" stroke-width=".8"/><rect x="428" y="560.8" width="13" height="12.2" rx="1.5" fill="url(#sbg)" stroke="#a8a8a8" stroke-width=".8"/><rect x="446" y="560.8" width="13.800000000000011" height="12.2" rx="1.5" fill="url(#sbb)" stroke="#5a86b8" stroke-width=".8"/><rect x="464" y="560.8" width="13.300000000000011" height="12.2" rx="1.5" fill="url(#sbb)" stroke="#5a86b8" stroke-width=".8"/><rect x="481.5" y="560.8" width="13.399999999999977" height="12.2" rx="1.5" fill="url(#sbb)" stroke="#5a86b8" stroke-width=".8"/><rect x="499" y="560.8" width="13.700000000000045" height="12.2" rx="1.5" fill="url(#sbb)" stroke="#5a86b8" stroke-width=".8"/><rect x="516.8" y="560.8" width="13.200000000000045" height="12.2" rx="1.5" fill="url(#sbb)" stroke="#5a86b8" stroke-width=".8"/><path d="M377.5 564 H381 M379.2 564 V569" stroke="#444" stroke-width="1.2"/><circle cx="383" cy="569.5" r="1.6" fill="#d8a020"/><path d="M395 563.5 V570.5 M397 565 L402 569.5 H399.6 L401 572 L399.8 572.5 L398.5 570 L397 571.5Z" fill="#fff" stroke="#333" stroke-width=".6"/><path d="M394 563 L397 563" stroke="#d04040" stroke-width=".8"/><g stroke="#222" stroke-width=".9"><line x1="412.7" y1="562.5" x2="412.7" y2="571.3"/><line x1="412.2" y1="563" x2="421.7" y2="563"/><line x1="414.7" y1="562.5" x2="414.7" y2="571.3"/><line x1="412.2" y1="565" x2="421.7" y2="565"/><line x1="416.7" y1="562.5" x2="416.7" y2="571.3"/><line x1="412.2" y1="567" x2="421.7" y2="567"/><line x1="418.7" y1="562.5" x2="418.7" y2="571.3"/><line x1="412.2" y1="569" x2="421.7" y2="569"/><line x1="420.7" y1="562.5" x2="420.7" y2="571.3"/><line x1="412.2" y1="571" x2="421.7" y2="571"/></g><path d="M430.5 564.5 L436.5 563 H439 V571 H436.5 L430.5 569.5Z M433 566.8 H439" fill="none" stroke="#444" stroke-width=".8"/><circle cx="452.9" cy="567" r="3.8" fill="none" stroke="#1a4a8a" stroke-width=".9"/><circle cx="452.9" cy="567" r=".8" fill="#1a4a8a"/><rect x="466.5" y="563" width="6" height="6.5" fill="none" stroke="#1a4a8a" stroke-width=".7" stroke-dasharray="1,.7"/><path d="M469 565 L474.5 569.5 H472 L473.3 572 L472.3 572.4 L471 570 L469 571.5Z" fill="#fff" stroke="#222" stroke-width=".6"/><rect x="484.5" y="563" width="7.5" height="6" fill="none" stroke="#1a4a8a" stroke-width=".7"/><circle cx="488.2" cy="565.5" r="1" fill="#1a4a8a"/><path d="M486 568 H490.5" stroke="#1a4a8a" stroke-width=".8"/><path d="M484 571.3 H493" stroke="#1a4a8a" stroke-width=".8"/><rect x="501.5" y="563.5" width="8.5" height="7" fill="none" stroke="#1a4a8a" stroke-width=".8" stroke-dasharray="1.2,.8"/><path d="M503 566.5 H508.5" stroke="#1a4a8a" stroke-width=".8"/><rect x="522" y="564.5" width="5.5" height="6" fill="none" stroke="#1a4a8a" stroke-width=".8"/><circle cx="519.8" cy="567.5" r="1" fill="#1a4a8a"/><circle cx="523" cy="562.8" r=".9" fill="#1a4a8a"/><rect x="534.4" y="561.8" width="43.9" height="10.2" rx="1.5" fill="url(#sbb)" stroke="#5a86b8" stroke-width=".8"/><rect x="584.2" y="561.2" width="49.6" height="11.6" fill="#f4f4f4" stroke="#a0a0a0" stroke-width=".8"/><path d="M622.5 565 H629 L625.75 569Z" fill="#111"/></svg>
<div class="t" style="left:6.80px;top:498.30px;font-size:7px;line-height:7px;color:#222;font-weight:bold;transform:scaleX(0.910);">Model</div>
<div class="t" style="left:38.50px;top:498.30px;font-size:7px;line-height:7px;color:#444;transform:scaleX(0.855);">Layout1</div>
<div class="t" style="left:2.00px;top:510.55px;font-size:7.5px;line-height:7.5px;color:#2a2a2a;font-weight:bold;transform:scaleX(0.822);">Command Window</div>
<div class="t" style="left:7.00px;top:521.50px;font-size:8px;line-height:8px;color:#333;transform:scaleX(0.852);">«Cancel»</div>
<div class="t" style="left:537.50px;top:563.25px;font-size:7.5px;line-height:7.5px;color:#1a3a6a;transform:scaleX(0.818);">Dynamic CCS</div>
<div class="t" style="left:587.00px;top:563.45px;font-size:7.5px;line-height:7.5px;color:#222;transform:scaleX(0.739);">Annotation</div>
<div class="t" style="left:637.40px;top:563.30px;font-size:7px;line-height:7px;color:#222;transform:scaleX(0.875);">(1:1)</div>
<div class="t" style="left:654.50px;top:563.50px;font-size:7px;line-height:7px;color:#222;transform:scaleX(0.821);">(1500.8619,774.0942,0.9803)</div>
<div class="a" style="left:410px;top:334.6px;width:58px;height:74px;background:#f0f0f0;border:1px solid #d8d8d8;"></div>
<div class="t" style="left:426.80px;top:338.60px;font-size:8px;line-height:8px;color:#222;transform:scaleX(0.812);">10 cm</div>
<div class="t" style="left:426.80px;top:350.40px;font-size:8px;line-height:8px;color:#222;transform:scaleX(0.835);">11 cm</div>
<div class="t" style="left:426.80px;top:362.20px;font-size:8px;line-height:8px;color:#222;transform:scaleX(0.812);">12 cm</div>
<div class="t" style="left:426.80px;top:374.00px;font-size:8px;line-height:8px;color:#222;transform:scaleX(0.812);">14 cm</div>
<div class="t" style="left:426.80px;top:385.80px;font-size:8px;line-height:8px;color:#222;transform:scaleX(0.812);">15 cm</div>
<div class="t" style="left:426.80px;top:397.50px;font-size:8px;line-height:8px;color:#222;transform:scaleX(0.812);">20 cm</div>
<div class="a" style="left:468px;top:379px;width:113px;height:14.5px;background:#f4f4f4;border:1px solid #c8c8c8;"></div>
<svg class="a" style="left:0px;top:0px;" width="1024" height="576" viewBox="0 0 1024 576"><path d="M415.5 389.5 L417.3 391.5 L420.5 387.5" fill="none" stroke="#333" stroke-width=".9"/><path d="M409.5 333 L409.5 343 L412 340.5 L414 344.5 L415.3 343.8 L413.5 340 H417Z" fill="#fff" stroke="#222" stroke-width=".7"/><rect x="475" y="383.1" width="7" height="1.5" fill="#222"/><rect x="475" y="385.5" width="7" height="1.3" fill="#333"/><rect x="475" y="387.7" width="7" height="1.1" fill="#333"/><rect x="475" y="389.6" width="7" height=".9" fill="#555"/><path d="M488.7 385.5 H491.7 L490.2 387.3Z" fill="#222"/><line x1="495.7" y1="380.5" x2="495.7" y2="392" stroke="#cfcfcf" stroke-width=".8"/><line x1="544.7" y1="380.5" x2="544.7" y2="392" stroke="#cfcfcf" stroke-width=".8"/><g transform="translate(504.3 386.8) scale(0.7) translate(-504.3 -386.8)"><path d="M499.8 387.6 L504.3 385.6 L508.8 387.6 L504.3 389.6Z" fill="#e0a818" stroke="#7a5a10" stroke-width=".6"/><path d="M499.8 384.8 L504.3 382.8 L508.8 384.8 L504.3 386.8Z" fill="#f6cc40" stroke="#7a5a10" stroke-width=".6"/></g><circle cx="506.3" cy="389.3" r="1.3" fill="#fff" stroke="#222" stroke-width=".9"/><path d="M517.5 382.8 H523 M517.5 390.8 H523" stroke="#222" stroke-width=".8"/><path d="M516.8 384 L520.2 382.8 L523.6 384 L520.2 385.5Z M516.8 389.5 L520.2 388.2 L523.6 389.5 L520.2 391Z" fill="#e8b820" stroke="#8a6a10" stroke-width=".4"/><path d="M519.3 385.5 L518.8 388.5 L521 388.2 L521.5 385.5" fill="#222"/><g transform="translate(536 386.5) scale(0.7) translate(-536 -386.5)"><path d="M531.5 387.3 L536 385.3 L540.5 387.3 L536 389.3Z" fill="#e0a818" stroke="#7a5a10" stroke-width=".6"/><path d="M531.5 384.5 L536 382.5 L540.5 384.5 L536 386.5Z" fill="#f6cc40" stroke="#7a5a10" stroke-width=".6"/></g><path d="M536.5 389.5 L537.8 390.6 L539.8 388.3" fill="none" stroke="#40a060" stroke-width=".7"/><path d="M555.8 381.8 L553 386 H555 L553.5 389.5 L557.5 385 H555.5 L557.5 381.8Z" fill="#f0c020" stroke="#8a6a10" stroke-width=".4"/><path d="M551.2 389.6 V391 M558.2 389.6 V391 M551.8 390.3 H557.6" stroke="#4a90c8" stroke-width=".7" stroke-dasharray="1,.5"/><rect x="564.6" y="383" width="7.7" height="6.5" fill="#eef4fa" stroke="#8aa8c8" stroke-width=".6"/><path d="M566 388.5 L568 385.2 L570 388.5" fill="none" stroke="#3a90d8" stroke-width=".6"/><circle cx="570.3" cy="384.6" r=".8" fill="#3a90d8"/><path d="M571.5 390.2 H574 M572.75 389 V391.4" stroke="#30a050" stroke-width=".7"/></svg>
</body></html>
